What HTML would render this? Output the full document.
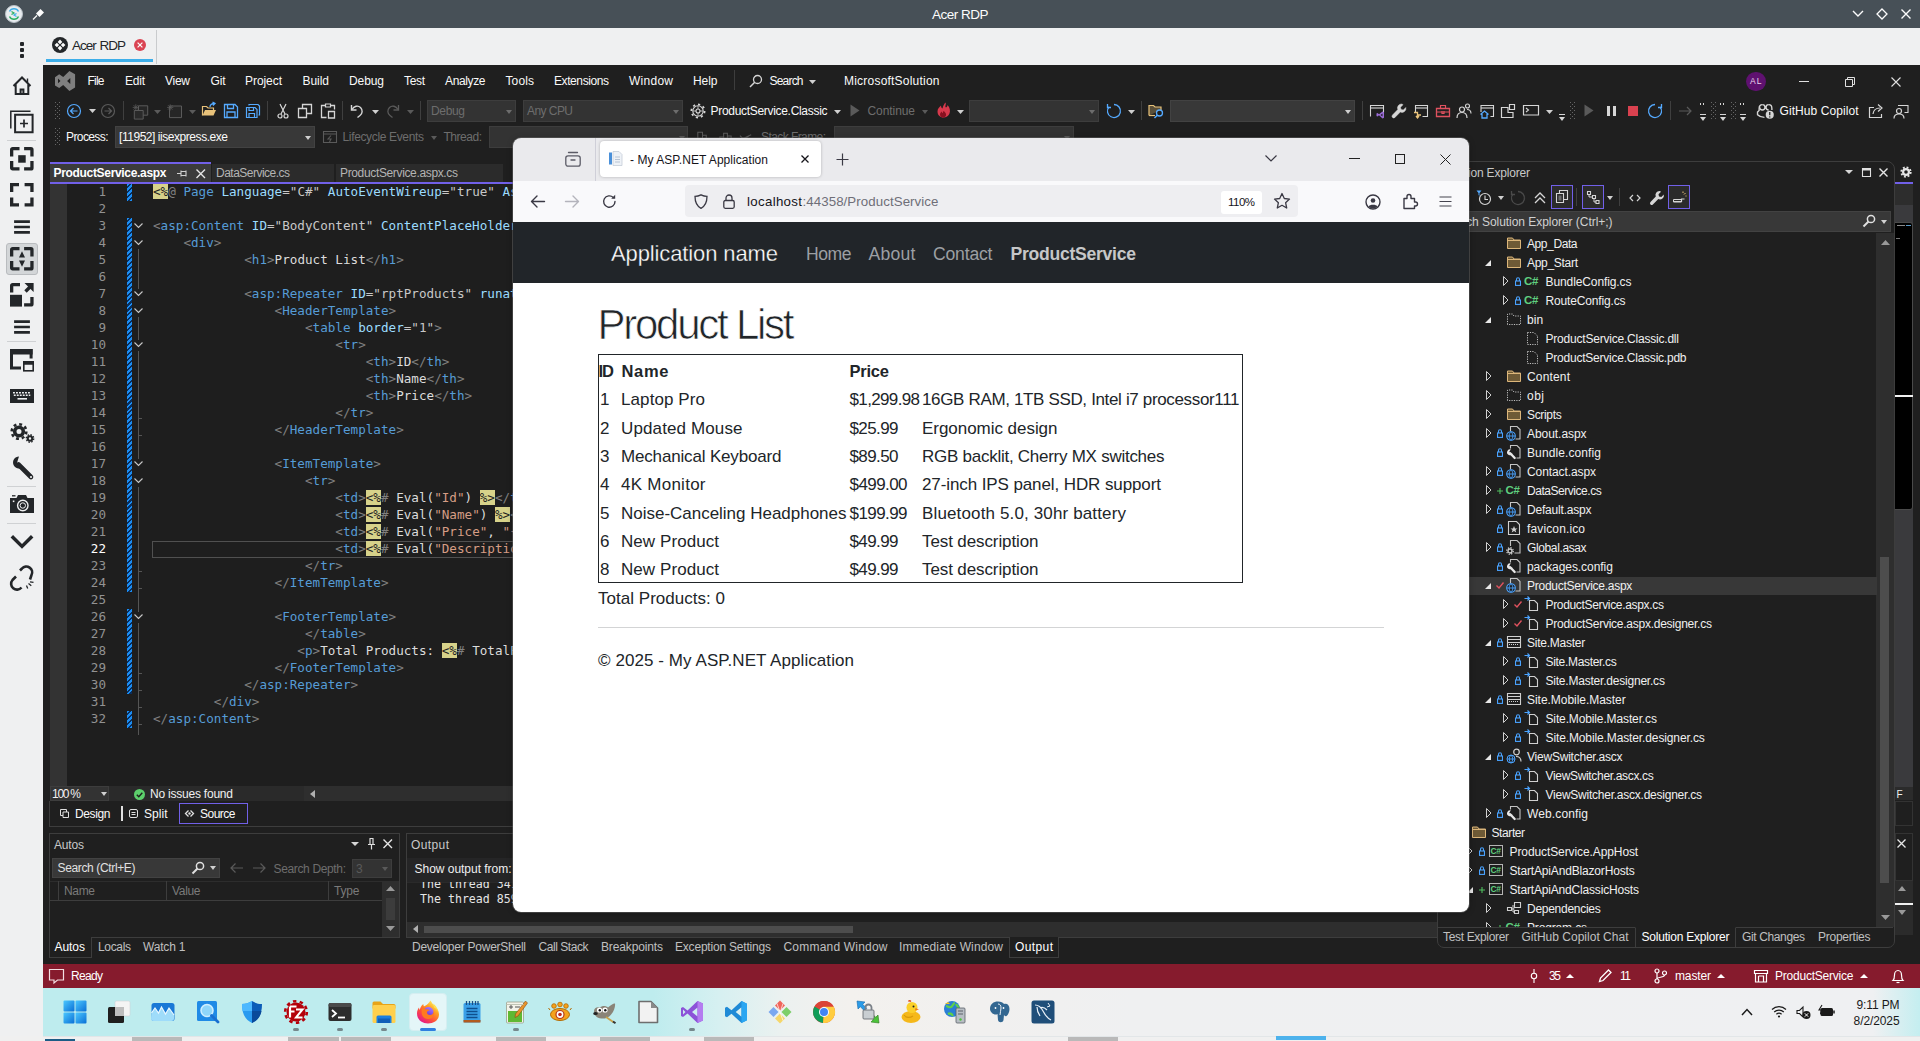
<!DOCTYPE html>
<html><head><meta charset="utf-8"><title>Acer RDP</title>
<style>
*{box-sizing:border-box}
html,body{margin:0;padding:0}
body{width:1920px;height:1041px;overflow:hidden;position:relative;background:#eff0f1;font-family:"Liberation Sans",sans-serif;font-size:12px;color:#fff}
.a{position:absolute}
.t{position:absolute;white-space:nowrap;line-height:1}
svg{position:absolute;overflow:visible}
.mono{font-family:"DejaVu Sans Mono","Liberation Mono",monospace}
.vs{font-family:"Liberation Sans",sans-serif;font-size:12px;color:#fafafa}
.dim{color:#6d6d6d}
.cb{position:absolute;background:#383838;border:1px solid #424242}
.cl{position:absolute;left:153px;white-space:pre;font-family:"DejaVu Sans Mono","Liberation Mono",monospace;font-size:12.6px;letter-spacing:0.015px;line-height:17px;height:17px;color:#dcdcdc}
.ln{position:absolute;left:60px;width:46px;text-align:right;font-family:"DejaVu Sans Mono","Liberation Mono",monospace;font-size:12.6px;line-height:17px;height:17px;color:#a0a0a0}
.g{color:#808080}.b{color:#569cd6}.lb{color:#9cdcfe}.s{color:#c8c8c8}.o{color:#d69d85}.w{color:#dcdcdc}
.y{background:#d7d28a;color:#1e1e1e}
.tr{position:absolute;white-space:nowrap;font-size:12px;line-height:19px;height:19px;color:#f1f1f1}
</style></head><body>

<!-- Acer RDP title bar -->
<div class="a" style="left:0;top:0;width:1920px;height:28px;background:#475057"></div>
<div class="t" style="left:0;width:1920px;top:7.500px;text-align:center;font-size:13.500px;color:#fcfcfc;letter-spacing:-0.500px">Acer RDP</div>
<svg style="left:5px;top:5px" width="18" height="18" viewBox="0 0 18 18"><circle cx="9" cy="9" r="8.5" fill="#e8ecef" stroke="#b8c0c6" stroke-width="1"/><path d="M4.5 11.5a5 5 0 0 0 9 0" fill="none" stroke="#27ae60" stroke-width="1.4"/><path d="M4.5 6.5a5 5 0 0 1 9 0" fill="none" stroke="#3daee9" stroke-width="1.4"/><path d="M6.5 6.5l2.5 1.5l-2.500 1.500" fill="none" stroke="#27ae60" stroke-width="1.2"/><path d="M11.5 8.500l-2.500 1.500l2.500 1.500" fill="none" stroke="#3daee9" stroke-width="1.200"/></svg>
<svg style="left:32px;top:8px" width="13" height="12" viewBox="0 0 13 12"><path d="M1 11.500L5 7.500" stroke="#fcfcfc" stroke-width="1.300" fill="none"/><path d="M4 5.500l4.500-4.500l3.500 3.500l-4.500 4.500z" fill="#fcfcfc"/></svg>
<svg style="left:1852px;top:9px" width="12" height="10" viewBox="0 0 12 10"><path d="M1 2l5 5l5-5" fill="none" stroke="#fcfcfc" stroke-width="1.400"/></svg>
<svg style="left:1876px;top:8px" width="12" height="12" viewBox="0 0 12 12"><path d="M6 1l5 5l-5 5l-5-5z" fill="none" stroke="#fcfcfc" stroke-width="1.300"/></svg>
<svg style="left:1900px;top:8px" width="12" height="12" viewBox="0 0 12 12"><path d="M1.500 1.500l9 9M10.500 1.500l-9 9" fill="none" stroke="#fcfcfc" stroke-width="1.400"/></svg>
<!-- tab bar -->
<div class="a" style="left:0;top:28px;width:1920px;height:37px;background:#eff0f1"></div>
<div class="a" style="left:46px;top:59px;width:107px;height:3px;background:#3daee9"></div>
<div class="a" style="left:156px;top:30px;width:1px;height:34px;background:#c9cbcd"></div>
<svg style="left:52px;top:37px" width="16" height="16" viewBox="0 0 16 16"><circle cx="8" cy="8" r="8" fill="#232629"/><path d="M8 2.600l2.300 2.300L8 7.200L5.700 4.900zM8 8.800l2.300 2.300L8 13.400l-2.300-2.300zM4.900 5.700l2.300 2.300l-2.300 2.300L2.600 8zM11.100 5.700l2.300 2.300l-2.300 2.300L8.800 8z" fill="#fcfcfc"/></svg>
<div class="t" style="left:72px;top:38.500px;font-size:13.500px;color:#232629;letter-spacing:-1px;word-spacing:1px">Acer RDP</div>
<svg style="left:134px;top:39px" width="12" height="12" viewBox="0 0 12 12"><circle cx="6" cy="6" r="6" fill="#da4453"/><path d="M3.600 3.600l4.800 4.800M8.400 3.600l-4.800 4.800" stroke="#fcfcfc" stroke-width="1.200"/></svg>
<!-- left sidebar -->
<div class="a" style="left:0;top:65px;width:43px;height:976px;background:#eff0f1"></div>
<div class="a" style="left:20px;top:42px;width:4px;height:4px;background:#232629;border-radius:1px"></div>
<div class="a" style="left:20px;top:48px;width:4px;height:4px;background:#232629;border-radius:1px"></div>
<div class="a" style="left:20px;top:54px;width:4px;height:4px;background:#232629;border-radius:1px"></div>
<div class="a" style="left:7px;top:140px;width:29px;height:1px;background:#cfd1d3"></div>
<div class="a" style="left:7px;top:341px;width:29px;height:1px;background:#cfd1d3"></div>
<div class="a" style="left:7px;top:486px;width:29px;height:1px;background:#cfd1d3"></div>
<div class="a" style="left:7px;top:523px;width:29px;height:1px;background:#cfd1d3"></div>
<div class="a" style="left:6px;top:243px;width:32px;height:32px;background:#d3d6d8;border:1px solid #b9bcbf;border-radius:3px"></div>
<svg style="left:10.0px;top:74.0px" width="24" height="24" viewBox="0 0 24 24" fill="none" stroke="#232629" stroke-width="2"><path d="M3.500 12L12 3.500L20.500 12M5.700 10.500v9.500h12.600v-9.500" stroke-width="2"/><path d="M10.600 20v-4.500h2.800v4.500" stroke-width="2"/><path d="M17.500 4.500v4" stroke-width="1.400"/></svg><svg style="left:10.0px;top:110.0px" width="24" height="24" viewBox="0 0 24 24" fill="none" stroke="#232629" stroke-width="2"><path d="M5.100 4.700H22.600V22.300H5.100z" stroke-width="2"/><path d="M0.800 18.500V1.200h19.700" stroke-width="1.500"/><path d="M14 9.500v8M10 13.500h8" stroke-width="1.700"/></svg><svg style="left:10.0px;top:147.0px" width="24" height="24" viewBox="0 0 24 24" fill="none" stroke="#232629" stroke-width="2"><path d="M1.650 9.500V2.650a1 1 0 0 1 1-1H9.500M14.100 1.650h6.850a1 1 0 0 1 1 1V9.500M21.950 14.100v6.850a1 1 0 0 1-1 1H14.100M9.500 21.950H2.650a1 1 0 0 1-1-1V14.100" stroke-width="3.300"/><rect x="8.200" y="8.200" width="7.500" height="7.500" fill="#232629" stroke="none"/></svg><svg style="left:10.0px;top:183.0px" width="24" height="24" viewBox="0 0 24 24" fill="none" stroke="#232629" stroke-width="2"><path d="M1.650 9V1.650H9M14.600 1.650h7.350V9M21.950 14.600v7.350H14.600M9 21.950H1.650V14.600" stroke-width="3.300"/></svg><svg style="left:10.0px;top:214.8px" width="24" height="24" viewBox="0 0 24 24" fill="none" stroke="#232629" stroke-width="2"><path d="M4.100 6.600h15.800M4.100 12h15.800M4.100 17.400h15.800" stroke-width="2.600"/></svg><svg style="left:10.0px;top:247.0px" width="24" height="24" viewBox="0 0 24 24" fill="none" stroke="#232629" stroke-width="2"><path d="M1.650 9.500V2.650a1 1 0 0 1 1-1H9.500M14.100 1.650h6.850a1 1 0 0 1 1 1V9.500M21.950 14.100v6.850a1 1 0 0 1-1 1H14.100M9.500 21.950H2.650a1 1 0 0 1-1-1V14.100" stroke-width="3.300"/><path d="M12 4.300l3 6.200h-6zM12 19.700l3-6.200h-6z" fill="#232629" stroke="none"/></svg><svg style="left:10.0px;top:283.0px" width="24" height="24" viewBox="0 0 24 24" fill="none" stroke="#232629" stroke-width="2"><path d="M1.650 9.500V2.650a1 1 0 0 1 1-1H10M21.950 14v6.950a1 1 0 0 1-1 1H14.100" stroke-width="3.300"/><rect x="0" y="11.800" width="12" height="11.800" fill="#232629" stroke="none"/><path d="M15.500 8.500l6-6" stroke-width="3.300"/><path d="M14.500 0h9.100v9.100z" fill="#232629" stroke="none"/></svg><svg style="left:10.0px;top:314.8px" width="24" height="24" viewBox="0 0 24 24" fill="none" stroke="#232629" stroke-width="2"><path d="M4.100 6.600h15.800M4.100 12h15.800M4.100 17.400h15.800" stroke-width="2.600"/></svg><svg style="left:10.0px;top:348.0px" width="24" height="24" viewBox="0 0 24 24" fill="none" stroke="#232629" stroke-width="2"><path d="M11 20H1.500V2.500h19.600v8" stroke-width="3"/><path d="M0 1h22.600v5.500H0z" fill="#232629" stroke="none"/><rect x="13.800" y="13.800" width="9.400" height="9" stroke-width="1.600"/><path d="M13.800 13.800h9.400v3h-9.400z" fill="#232629" stroke="none"/></svg><svg style="left:10.0px;top:384.0px" width="24" height="24" viewBox="0 0 24 24" fill="none" stroke="#232629" stroke-width="2"><rect x="0" y="5" width="24" height="14" fill="#232629" stroke="none"/><path d="M3 8.700h18M3.800 11.300h16.500" stroke="#eff0f1" stroke-width="1.500" stroke-dasharray="1.900 1.100"/><path d="M7.500 14.800h9.500" stroke="#eff0f1" stroke-width="1.600"/></svg><svg style="left:10.0px;top:420.0px" width="24" height="24" viewBox="0 0 24 24" fill="none" stroke="#232629" stroke-width="2"><circle cx="9" cy="11.500" r="4.300" stroke-width="3.600"/><circle cx="9" cy="11.500" r="7.300" stroke-width="2.600" stroke-dasharray="2.900 2.830"/><circle cx="20" cy="18.500" r="2.200" stroke-width="2"/><circle cx="20" cy="18.500" r="3.700" stroke-width="1.400" stroke-dasharray="1.500 1.400"/></svg><svg style="left:10.0px;top:456.0px" width="24" height="24" viewBox="0 0 24 24" fill="none" stroke="#232629" stroke-width="2"><path d="M8.500 8.500L21 21" stroke-width="4.600" stroke-linecap="round"/><path d="M9 0.500a6 6 0 1 0 4.500 10l-4-0.500l-2.500-3l1-3.500z" fill="#232629" stroke="none"/><path d="M0.300 5.500a6.500 6.500 0 0 0 10 5.500" stroke-width="0"/><circle cx="21" cy="21" r="1.100" fill="#eff0f1" stroke="none"/></svg><svg style="left:10.0px;top:493.0px" width="24" height="24" viewBox="0 0 24 24" fill="none" stroke="#232629" stroke-width="2"><path d="M0 5h6.500l1.500-3h8l1.500 3h6.500v15h-24z" fill="#232629" stroke="none"/><path d="M2 2.800h3.500" stroke-width="1.300"/><circle cx="12.800" cy="12.500" r="5.200" fill="#232629" stroke="#eff0f1" stroke-width="1.400"/><circle cx="12.800" cy="12.500" r="2.700" fill="#232629" stroke="#eff0f1" stroke-width="1"/><rect x="2.800" y="7.500" width="1.600" height="1.600" fill="#eff0f1" stroke="none"/></svg><svg style="left:10.0px;top:530.0px" width="24" height="24" viewBox="0 0 24 24" fill="none" stroke="#232629" stroke-width="2"><path d="M1.800 6.200l10.200 10.200l10.200-10.200" stroke-width="3.500"/></svg><svg style="left:10.0px;top:566.0px" width="24" height="24" viewBox="0 0 24 24" fill="none" stroke="#232629" stroke-width="2"><path d="M11.500 21.500a5.800 5.800 0 0 1-9-7.500l3.500-3.500M10 4.500l2-2a5.800 5.800 0 0 1 9.500 6.500l-1.500 4.500" stroke-width="2.600" stroke-linecap="butt"/><path d="M16.500 19.500l1.200 3M18.500 17.500l2.800 2.200M20 15.800l3.500 0.500" stroke-width="1.300"/></svg><div class="a" style="left:43px;top:65px;width:1877px;height:923px;background:#1f1f1f;"></div><div class="t" style="left:87.5px;top:72.84px;font-size:12px;line-height:16px;height:16px;color:#fafafa;letter-spacing:-0.779px;">File</div><div class="t" style="left:125px;top:72.84px;font-size:12px;line-height:16px;height:16px;color:#fafafa;letter-spacing:-0.226px;">Edit</div><div class="t" style="left:165px;top:72.84px;font-size:12px;line-height:16px;height:16px;color:#fafafa;letter-spacing:-0.265px;">View</div><div class="t" style="left:210.5px;top:72.84px;font-size:12px;line-height:16px;height:16px;color:#fafafa;letter-spacing:-0.167px;">Git</div><div class="t" style="left:245px;top:72.84px;font-size:12px;line-height:16px;height:16px;color:#fafafa;letter-spacing:-0.058px;">Project</div><div class="t" style="left:302.5px;top:72.84px;font-size:12px;line-height:16px;height:16px;color:#fafafa;letter-spacing:-0.046px;">Build</div><div class="t" style="left:349px;top:72.84px;font-size:12px;line-height:16px;height:16px;color:#fafafa;letter-spacing:-0.091px;">Debug</div><div class="t" style="left:404px;top:72.84px;font-size:12px;line-height:16px;height:16px;color:#fafafa;letter-spacing:-0.336px;">Test</div><div class="t" style="left:445px;top:72.84px;font-size:12px;line-height:16px;height:16px;color:#fafafa;letter-spacing:-0.365px;">Analyze</div><div class="t" style="left:505.5px;top:72.84px;font-size:12px;line-height:16px;height:16px;color:#fafafa;letter-spacing:0.121px;">Tools</div><div class="t" style="left:554px;top:72.84px;font-size:12px;line-height:16px;height:16px;color:#fafafa;letter-spacing:-0.411px;">Extensions</div><div class="t" style="left:629px;top:72.84px;font-size:12px;line-height:16px;height:16px;color:#fafafa;letter-spacing:0.264px;">Window</div><div class="t" style="left:693px;top:72.84px;font-size:12px;line-height:16px;height:16px;color:#fafafa;letter-spacing:-0.06px;">Help</div><div class="a" style="left:734px;top:70px;width:1px;height:20px;background:#3d3d3d;"></div><svg style="left:749px;top:74px;" width="14" height="14" viewBox="0 0 14 14"><circle cx="8.500" cy="5.500" r="4" fill="none" stroke="#d6d6d6" stroke-width="1.300"/><path d="M5.700 8.300L1 13" stroke="#d6d6d6" stroke-width="1.500"/></svg><div class="t" style="left:769.5px;top:72.84px;font-size:12px;line-height:16px;height:16px;color:#fafafa;letter-spacing:-0.805px;">Search</div><svg style="left:809.0px;top:80px;" width="7" height="4" viewBox="0 0 7 4"><path d="M0 0h7l-3.5 4z" fill="#d0d0d0"/></svg><div class="t" style="left:844px;top:72.84px;font-size:12px;line-height:16px;height:16px;color:#fafafa;letter-spacing:0.216px;">MicrosoftSolution</div><svg style="left:54.9px;top:71px;" width="20.2" height="20" viewBox="0 0 20.2 20"><path d="M0 6.300L4.200 3.200L8.200 5.900L14.400 0L20.100 3.200V16.500L14.400 20L8.200 14.100L4.200 16.900L0 14.400zM3 7.400L5.500 9.900L3 12.300zM15.300 6.900V13.100L12.100 10z" fill="#7f7f7f" fill-rule="evenodd"/></svg><div class="a" style="left:1746px;top:71.5px;width:19.5px;height:19.5px;background:#5f1170;border-radius:50%"></div><div class="t" style="left:1750px;top:76.05px;font-size:8.5px;line-height:11px;height:11px;color:#e8d6ee;letter-spacing:1.103px;">AL</div><div class="a" style="left:1799px;top:81px;width:10px;height:1px;background:#e0e0e0;"></div><svg style="left:1845px;top:77px;" width="10" height="10" viewBox="0 0 10 10"><path d="M0.500 2.500h7v7h-7z" fill="none" stroke="#e0e0e0" stroke-width="1"/><path d="M2.500 2.500v-2h7v7h-2" fill="none" stroke="#e0e0e0" stroke-width="1"/></svg><svg style="left:1891px;top:77px;" width="10" height="10" viewBox="0 0 10 10"><path d="M0.500 0.500l9 9M9.500 0.500l-9 9" stroke="#e0e0e0" stroke-width="1.100" fill="none"/></svg><svg style="left:55px;top:102px;" width="6" height="18" viewBox="0 0 6 18"><rect x="0" y="0" width="1" height="1" fill="#666"/><rect x="4" y="0" width="1" height="1" fill="#666"/><rect x="2" y="2" width="1" height="1" fill="#666"/><rect x="0" y="4" width="1" height="1" fill="#666"/><rect x="4" y="4" width="1" height="1" fill="#666"/><rect x="2" y="6" width="1" height="1" fill="#666"/><rect x="0" y="8" width="1" height="1" fill="#666"/><rect x="4" y="8" width="1" height="1" fill="#666"/><rect x="2" y="10" width="1" height="1" fill="#666"/><rect x="0" y="12" width="1" height="1" fill="#666"/><rect x="4" y="12" width="1" height="1" fill="#666"/><rect x="2" y="14" width="1" height="1" fill="#666"/><rect x="0" y="16" width="1" height="1" fill="#666"/><rect x="4" y="16" width="1" height="1" fill="#666"/></svg><svg style="left:66.0px;top:102.5px;" width="16" height="16" viewBox="0 0 16 16"><circle cx="8" cy="8" r="6.500" fill="none" stroke="#55aaff" stroke-width="1.200"/><path d="M11.500 8h-7M7.500 5l-3 3l3 3" fill="none" stroke="#55aaff" stroke-width="1.200"/></svg><svg style="left:88.5px;top:109px;" width="7" height="4" viewBox="0 0 7 4"><path d="M0 0h7l-3.5 4z" fill="#d0d0d0"/></svg><svg style="left:100.0px;top:102.5px;" width="16" height="16" viewBox="0 0 16 16"><circle cx="8" cy="8" r="6.500" fill="none" stroke="#5a5a5a" stroke-width="1.200"/><path d="M4.500 8h7M8.500 5l3 3l-3 3" fill="none" stroke="#5a5a5a" stroke-width="1.200"/></svg><div class="a" style="left:123px;top:101px;width:1px;height:19px;background:#3f3f3f;"></div><svg style="left:132.0px;top:102.5px;" width="16" height="16" viewBox="0 0 16 16"><path d="M6.500 2.800h9.200v9.400h-9.200z" fill="#262626" stroke="#5a5a5a"/><path d="M2.300 7.500h8.900v8.600h-8.900z" fill="#2a2a2a" stroke="#5a5a5a"/><path d="M3.800 1.300v6.200M0.700 4.400h6.200M1.600 2.200l4.400 4.400M6 2.200l-4.400 4.400" stroke="#5a5a5a" stroke-width="0.800"/></svg><svg style="left:153.5px;top:109.5px;" width="7" height="4" viewBox="0 0 7 4"><path d="M0 0h7l-3.5 4z" fill="#5a5a5a"/></svg><svg style="left:167.0px;top:102.5px;" width="16" height="16" viewBox="0 0 16 16"><path d="M2.500 3h12v11.600h-12z" fill="#262626" stroke="#5a5a5a"/><path d="M3.200 1.300v6.200M0.100 4.400h6.200M1 2.200l4.400 4.400M5.400 2.200l-4.400 4.400" stroke="#5a5a5a" stroke-width="0.800"/></svg><svg style="left:188.5px;top:109.5px;" width="7" height="4" viewBox="0 0 7 4"><path d="M0 0h7l-3.5 4z" fill="#5a5a5a"/></svg><svg style="left:201.0px;top:102.0px;" width="16" height="16" viewBox="0 0 16 16"><path d="M1.500 13.500v-9h4l1.500 1.500h5.500v2" fill="none" stroke="#e8c27a" stroke-width="1.200"/><path d="M1.500 13.500l2.500-5.500h11l-2.500 5.500z" fill="#e8c27a"/><path d="M9 5c0-2.500 2-3.500 4.500-3.500M11.500 0l2.500 1.500l-2 2" fill="none" stroke="#55aaff" stroke-width="1.300"/></svg><svg style="left:223.0px;top:102.5px;" width="16" height="16" viewBox="0 0 16 16"><path d="M1.500 1.500h10.500l2.500 2.500v10.500h-13z" fill="none" stroke="#55aaff" stroke-width="1.300"/><path d="M4.500 1.500v4h6v-4M4 14.500v-5.500h8v5.500" fill="none" stroke="#55aaff" stroke-width="1.300"/></svg><svg style="left:244.5px;top:102.5px;" width="16" height="16" viewBox="0 0 16 16"><path d="M1.500 4.500h8.500l2 2v8h-10.500z" fill="none" stroke="#55aaff" stroke-width="1.200"/><path d="M4 4.500v3h4.500v-3M4 14.500v-4h5.500v4" fill="none" stroke="#55aaff" stroke-width="1.200"/><path d="M4 2.500v-1h9l1.500 1.500v9h-1" fill="none" stroke="#55aaff" stroke-width="1.200"/></svg><div class="a" style="left:267px;top:101px;width:1px;height:19px;background:#3f3f3f;"></div><svg style="left:274.5px;top:102.5px;" width="16" height="16" viewBox="0 0 16 16"><path d="M5 1l5 10M11 1l-5 10" stroke="#d6d6d6" stroke-width="1.200" fill="none"/><circle cx="5" cy="13" r="2" fill="none" stroke="#d6d6d6" stroke-width="1.200"/><circle cx="11" cy="13" r="2" fill="none" stroke="#d6d6d6" stroke-width="1.200"/></svg><svg style="left:297.0px;top:102.5px;" width="16" height="16" viewBox="0 0 16 16"><path d="M1.500 5.500h8v9h-8z" fill="none" stroke="#d6d6d6" stroke-width="1.300"/><path d="M5.500 5v-3.500h9v9h-4.500" fill="none" stroke="#d6d6d6" stroke-width="1.300"/></svg><svg style="left:319.5px;top:102.5px;" width="16" height="16" viewBox="0 0 16 16"><path d="M5 2.500h-3.500v12h5M11 2.500h3.500v4" fill="none" stroke="#d6d6d6" stroke-width="1.300"/><path d="M5.500 1h5v3h-5z" fill="none" stroke="#d6d6d6" stroke-width="1.200"/><path d="M8.500 8.500h6v6.500h-6z" fill="none" stroke="#d6d6d6" stroke-width="1.300"/></svg><div class="a" style="left:341.5px;top:101px;width:1px;height:19px;background:#3f3f3f;"></div><svg style="left:349.0px;top:102.5px;" width="16" height="16" viewBox="0 0 16 16"><path d="M2.500 2v5h5" fill="none" stroke="#d6d6d6" stroke-width="1.400"/><path d="M3 6.500c2-3.500 6-4.500 8.500-2s2 6-0.500 8l-2.500 2" fill="none" stroke="#d6d6d6" stroke-width="1.400"/></svg><svg style="left:371.5px;top:109.5px;" width="7" height="4" viewBox="0 0 7 4"><path d="M0 0h7l-3.5 4z" fill="#d0d0d0"/></svg><svg style="left:384.5px;top:102.5px;" width="16" height="16" viewBox="0 0 16 16"><path d="M13.500 2v5h-5" fill="none" stroke="#5a5a5a" stroke-width="1.300"/><path d="M13 6.500c-2-3.500-6-4.500-8.500-2s-2 6 0.500 8l2.500 2" fill="none" stroke="#5a5a5a" stroke-width="1.300"/></svg><svg style="left:406.5px;top:109.5px;" width="7" height="4" viewBox="0 0 7 4"><path d="M0 0h7l-3.5 4z" fill="#5a5a5a"/></svg><div class="a" style="left:419.5px;top:101px;width:1px;height:19px;background:#3f3f3f;"></div><div class="a" style="left:427px;top:100px;width:89px;height:22px;background:#333333;border:1px solid #3d3d3d"></div><div class="t" style="left:431px;top:103.34px;font-size:12px;line-height:16px;height:16px;color:#6d6d6d;letter-spacing:-0.341px;">Debug</div><svg style="left:505.5px;top:109.5px;" width="6" height="4" viewBox="0 0 6 4"><path d="M0 0h6l-3.0 4z" fill="#6d6d6d"/></svg><div class="a" style="left:523px;top:100px;width:160px;height:22px;background:#333333;border:1px solid #3d3d3d"></div><div class="t" style="left:527px;top:103.34px;font-size:12px;line-height:16px;height:16px;color:#6d6d6d;letter-spacing:-0.558px;">Any CPU</div><svg style="left:672.5px;top:109.5px;" width="6" height="4" viewBox="0 0 6 4"><path d="M0 0h6l-3.0 4z" fill="#6d6d6d"/></svg><svg style="left:689.5px;top:102.5px;" width="16" height="16" viewBox="0 0 16 16"><circle cx="8" cy="8" r="5.200" fill="none" stroke="#d6d6d6" stroke-width="1.100"/><circle cx="8" cy="8" r="2" fill="none" stroke="#d6d6d6" stroke-width="1.100"/><circle cx="8" cy="8" r="6.600" fill="none" stroke="#d6d6d6" stroke-width="1.800" stroke-dasharray="2.200 2.950"/><path d="M8 3v3M8 10v3M3 8h3M10 8h3" stroke="#d6d6d6" stroke-width="0.800"/></svg><div class="t" style="left:710.5px;top:103.34px;font-size:12px;line-height:16px;height:16px;color:#fafafa;letter-spacing:-0.304px;">ProductService.Classic</div><svg style="left:833.5px;top:109.5px;" width="7" height="4" viewBox="0 0 7 4"><path d="M0 0h7l-3.5 4z" fill="#d0d0d0"/></svg><svg style="left:850px;top:104px;" width="10" height="13" viewBox="0 0 10 13"><path d="M0.500 0.500l9 6l-9 6z" fill="#5a5a5a"/></svg><div class="t" style="left:867.5px;top:103.34px;font-size:12px;line-height:16px;height:16px;color:#6d6d6d;letter-spacing:-0.077px;">Continue</div><svg style="left:922.0px;top:109.5px;" width="6" height="4" viewBox="0 0 6 4"><path d="M0 0h6l-3.0 4z" fill="#5a5a5a"/></svg><svg style="left:935.5px;top:102.0px;" width="16" height="16" viewBox="0 0 16 16"><path d="M9.500 0.500c1 2-1 3.500 0.500 5c1-0.500 1.500-1.500 1.500-2.500c2.500 2.500 3 6 2 8.500c-1 2.500-3.500 4-6 4c-3.500 0-6-2.500-6-6c0-3 2-4.500 3.500-6c0 1.500 0.500 2.500 1.500 3c0.500-2.500 1.500-4.500 3-6z" fill="#d8394c"/><path d="M7.500 9c1.500 1 3 2.500 2.500 4.500c-0.500 1.500-2 2-3 2c-2 0-3-1.500-3-3c0-1.500 1-2.500 2-3c0 1 0.500 1.500 1 1.500c0-0.500 0-1.500 0.500-2z" fill="#8a1020"/></svg><svg style="left:956.5px;top:109.5px;" width="7" height="4" viewBox="0 0 7 4"><path d="M0 0h7l-3.5 4z" fill="#d0d0d0"/></svg><div class="a" style="left:969px;top:100px;width:130px;height:22px;background:#333333;border:1px solid #3d3d3d"></div><svg style="left:1089.0px;top:109.5px;" width="6" height="4" viewBox="0 0 6 4"><path d="M0 0h6l-3.0 4z" fill="#6d6d6d"/></svg><svg style="left:1105.5px;top:102.5px;" width="16" height="16" viewBox="0 0 16 16"><path d="M8 1.500a6.500 6.500 0 1 1-5 2.300" fill="none" stroke="#55aaff" stroke-width="1.300"/><path d="M1.500 1v3.500h3.500" fill="none" stroke="#55aaff" stroke-width="1.300"/></svg><svg style="left:1127.5px;top:109.5px;" width="7" height="4" viewBox="0 0 7 4"><path d="M0 0h7l-3.5 4z" fill="#d0d0d0"/></svg><div class="a" style="left:1140.5px;top:101px;width:1px;height:19px;background:#3f3f3f;"></div><svg style="left:1148.0px;top:102.5px;" width="16" height="16" viewBox="0 0 16 16"><path d="M1 12.500v-10h4.500l1.500 1.500h6v3" fill="#c9a86a" fill-opacity="0.35" stroke="#e8c27a" stroke-width="1.200"/><path d="M1 12.500h6" stroke="#e8c27a" stroke-width="1.200"/><circle cx="11.500" cy="10" r="3" fill="none" stroke="#55aaff" stroke-width="1.300"/><path d="M9.300 12.200l-2.800 2.800" stroke="#55aaff" stroke-width="1.500"/></svg><div class="a" style="left:1170px;top:100px;width:185px;height:22px;background:#383838;border:1px solid #424242"></div><svg style="left:1344.5px;top:109.5px;" width="6" height="4" viewBox="0 0 6 4"><path d="M0 0h6l-3.0 4z" fill="#d0d0d0"/></svg><div class="a" style="left:1361.5px;top:101px;width:1px;height:19px;background:#3f3f3f;"></div><svg style="left:1368.5px;top:102.5px;" width="16" height="16" viewBox="0 0 16 16"><path d="M1.500 13.500v-11h13v7" fill="none" stroke="#d6d6d6" stroke-width="1.100"/><path d="M1.500 5h13" stroke="#d6d6d6" stroke-width="1.100"/><path d="M13.500 8.500l1.500 0.800v5.400l-1.500 0.800l-3.500-3.200l-1.500 1.200l-1-0.500v-2.500l1-0.500l1.500 1.200zM13.500 10.500l-2 1.500l2 1.500z" fill="#9b6cd8" fill-rule="evenodd"/></svg><svg style="left:1390.5px;top:102.5px;" width="16" height="16" viewBox="0 0 16 16"><path d="M10.500 1a4 4 0 0 0-3.700 5.600L1.500 12a1.600 1.600 0 0 0 2.400 2.400l5.400-5.300A4 4 0 0 0 14.800 4.500l-2.500 2.500l-2.300-0.500l-0.500-2.300l2.500-2.500a4 4 0 0 0-1.500-0.700z" fill="#d6d6d6" stroke="#d6d6d6" stroke-width="0.500"/></svg><svg style="left:1412.5px;top:102.5px;" width="16" height="16" viewBox="0 0 16 16"><path d="M2.500 9v-6.500h12v11h-5" fill="none" stroke="#d6d6d6" stroke-width="1.100"/><path d="M2.500 5h12" stroke="#d6d6d6" stroke-width="1.100"/><path d="M1 9.500h3.500v5.500M3 13l1.500 2l1.500-2M4.500 12h3.500" fill="none" stroke="#e8c27a" stroke-width="1.300"/></svg><svg style="left:1435.0px;top:102.5px;" width="16" height="16" viewBox="0 0 16 16"><path d="M1.500 5.500h13v8h-13z" fill="none" stroke="#e0525f" stroke-width="1.300"/><path d="M5.500 5v-2.500h5v2.500M1.500 9h13M7 8v2.500h2v-2.500" fill="none" stroke="#e0525f" stroke-width="1.200"/></svg><svg style="left:1456.0px;top:102.5px;" width="16" height="16" viewBox="0 0 16 16"><circle cx="6" cy="6.500" r="2.500" fill="none" stroke="#d6d6d6" stroke-width="1.200"/><path d="M1 15c0-4 2-5.500 5-5.500s5 1.500 5 5.500" fill="none" stroke="#d6d6d6" stroke-width="1.200"/><circle cx="11.500" cy="3" r="2" fill="none" stroke="#d6d6d6" stroke-width="1.100"/><path d="M11 6.500c2.500 0 4 1 4 4" fill="none" stroke="#d6d6d6" stroke-width="1.100"/></svg><svg style="left:1478.5px;top:102.5px;" width="16" height="16" viewBox="0 0 16 16"><path d="M2 9v-6.500h12.500v11h-3" fill="none" stroke="#d6d6d6" stroke-width="1.100"/><path d="M2 5h12.500" stroke="#d6d6d6" stroke-width="1.100"/><path d="M1.500 11.500l4-3.500l4 3.500M3 11v4h5v-4" fill="none" stroke="#55aaff" stroke-width="1.300"/></svg><svg style="left:1500.0px;top:102.5px;" width="16" height="16" viewBox="0 0 16 16"><path d="M1.500 4.500h6.500v5h5v5h-11.500z" fill="none" stroke="#d6d6d6" stroke-width="1.200"/><path d="M9.500 1.500h5v5h-5z" fill="none" stroke="#d6d6d6" stroke-width="1.200"/></svg><svg style="left:1523.0px;top:102.0px;" width="16" height="16" viewBox="0 0 16 16"><path d="M0.500 3.500h15v9.500h-15z" fill="none" stroke="#d6d6d6" stroke-width="1.200"/><path d="M3 6l2.500 2l-2.500 2" fill="none" stroke="#d6d6d6" stroke-width="1.100"/></svg><svg style="left:1545.5px;top:109.5px;" width="7" height="4" viewBox="0 0 7 4"><path d="M0 0h7l-3.5 4z" fill="#d0d0d0"/></svg><div class="a" style="left:1558.5px;top:114px;width:6px;height:1px;background:#d6d6d6;"></div><svg style="left:1558.5px;top:116.5px;" width="6" height="4" viewBox="0 0 6 4"><path d="M0 0h6l-3.0 4z" fill="#d6d6d6"/></svg><svg style="left:1570px;top:102px;" width="6" height="18" viewBox="0 0 6 18"><rect x="0" y="0" width="1" height="1" fill="#666"/><rect x="4" y="0" width="1" height="1" fill="#666"/><rect x="2" y="2" width="1" height="1" fill="#666"/><rect x="0" y="4" width="1" height="1" fill="#666"/><rect x="4" y="4" width="1" height="1" fill="#666"/><rect x="2" y="6" width="1" height="1" fill="#666"/><rect x="0" y="8" width="1" height="1" fill="#666"/><rect x="4" y="8" width="1" height="1" fill="#666"/><rect x="2" y="10" width="1" height="1" fill="#666"/><rect x="0" y="12" width="1" height="1" fill="#666"/><rect x="4" y="12" width="1" height="1" fill="#666"/><rect x="2" y="14" width="1" height="1" fill="#666"/><rect x="0" y="16" width="1" height="1" fill="#666"/><rect x="4" y="16" width="1" height="1" fill="#666"/></svg><svg style="left:1584px;top:104px;" width="10" height="13" viewBox="0 0 10 13"><path d="M0.500 0.500l9 6l-9 6z" fill="#5a5a5a"/></svg><div class="a" style="left:1606.5px;top:105.5px;width:3.5px;height:10px;background:#d6d6d6;"></div><div class="a" style="left:1612.5px;top:105.5px;width:3.5px;height:10px;background:#d6d6d6;"></div><div class="a" style="left:1628px;top:105.5px;width:10px;height:10px;background:#d9414f;"></div><svg style="left:1647.0px;top:102.5px;" width="16" height="16" viewBox="0 0 16 16"><path d="M8 1.500a6.500 6.500 0 1 0 5 2.300" fill="none" stroke="#55aaff" stroke-width="1.300"/><path d="M14.500 1v3.500h-3.500" fill="none" stroke="#55aaff" stroke-width="1.300"/></svg><div class="a" style="left:1669.5px;top:101px;width:1px;height:19px;background:#3f3f3f;"></div><svg style="left:1677.0px;top:103.0px;" width="16" height="16" viewBox="0 0 16 16"><path d="M2 8h12M10 4l4 4l-4 4" fill="none" stroke="#5a5a5a" stroke-width="1.200"/></svg><div class="a" style="left:1699.5px;top:103px;width:1px;height:2px;background:#d6d6d6;"></div><div class="a" style="left:1702.5px;top:103px;width:1px;height:2px;background:#d6d6d6;"></div><div class="a" style="left:1699.5px;top:114px;width:6px;height:1px;background:#d6d6d6;"></div><svg style="left:1699.5px;top:116.5px;" width="6" height="4" viewBox="0 0 6 4"><path d="M0 0h6l-3.0 4z" fill="#d6d6d6"/></svg><div class="a" style="left:1719.5px;top:103px;width:1px;height:2px;background:#d6d6d6;"></div><div class="a" style="left:1722.5px;top:103px;width:1px;height:2px;background:#d6d6d6;"></div><div class="a" style="left:1719.5px;top:114px;width:6px;height:1px;background:#d6d6d6;"></div><svg style="left:1719.5px;top:116.5px;" width="6" height="4" viewBox="0 0 6 4"><path d="M0 0h6l-3.0 4z" fill="#d6d6d6"/></svg><div class="a" style="left:1739.5px;top:103px;width:1px;height:2px;background:#d6d6d6;"></div><div class="a" style="left:1742.5px;top:103px;width:1px;height:2px;background:#d6d6d6;"></div><div class="a" style="left:1739.5px;top:114px;width:6px;height:1px;background:#d6d6d6;"></div><svg style="left:1739.5px;top:116.5px;" width="6" height="4" viewBox="0 0 6 4"><path d="M0 0h6l-3.0 4z" fill="#d6d6d6"/></svg><svg style="left:1711px;top:102px;" width="6" height="18" viewBox="0 0 6 18"><rect x="0" y="0" width="1" height="1" fill="#666"/><rect x="4" y="0" width="1" height="1" fill="#666"/><rect x="2" y="2" width="1" height="1" fill="#666"/><rect x="0" y="4" width="1" height="1" fill="#666"/><rect x="4" y="4" width="1" height="1" fill="#666"/><rect x="2" y="6" width="1" height="1" fill="#666"/><rect x="0" y="8" width="1" height="1" fill="#666"/><rect x="4" y="8" width="1" height="1" fill="#666"/><rect x="2" y="10" width="1" height="1" fill="#666"/><rect x="0" y="12" width="1" height="1" fill="#666"/><rect x="4" y="12" width="1" height="1" fill="#666"/><rect x="2" y="14" width="1" height="1" fill="#666"/><rect x="0" y="16" width="1" height="1" fill="#666"/><rect x="4" y="16" width="1" height="1" fill="#666"/></svg><svg style="left:1731px;top:102px;" width="6" height="18" viewBox="0 0 6 18"><rect x="0" y="0" width="1" height="1" fill="#666"/><rect x="4" y="0" width="1" height="1" fill="#666"/><rect x="2" y="2" width="1" height="1" fill="#666"/><rect x="0" y="4" width="1" height="1" fill="#666"/><rect x="4" y="4" width="1" height="1" fill="#666"/><rect x="2" y="6" width="1" height="1" fill="#666"/><rect x="0" y="8" width="1" height="1" fill="#666"/><rect x="4" y="8" width="1" height="1" fill="#666"/><rect x="2" y="10" width="1" height="1" fill="#666"/><rect x="0" y="12" width="1" height="1" fill="#666"/><rect x="4" y="12" width="1" height="1" fill="#666"/><rect x="2" y="14" width="1" height="1" fill="#666"/><rect x="0" y="16" width="1" height="1" fill="#666"/><rect x="4" y="16" width="1" height="1" fill="#666"/></svg><svg style="left:1756.5px;top:102.0px;" width="17" height="17" viewBox="0 0 16 16"><path d="M5 2.500c-2 0-3 1.500-3 3.500v2l-1.500 1.500v2.500c1.500 1.500 4 2.500 6.500 2.500M11 2.500c2 0 3 1.500 3 3.500v1.500" fill="none" stroke="#d6d6d6" stroke-width="1.300"/><path d="M5 2.500c1.500 0 2.500 1 2.500 2.500s-1 2.500-2.500 2.500s-2.500-1-2.500-2.500M11 2.500c-1.500 0-2.500 1-2.500 2.500s1 2.500 2.500 2.500" fill="none" stroke="#d6d6d6" stroke-width="1.300"/><circle cx="12" cy="12" r="3.800" fill="#d6d6d6"/><path d="M12 9.500v3" stroke="#1f1f1f" stroke-width="1.200"/><circle cx="12" cy="14" r="0.700" fill="#1f1f1f"/></svg><div class="t" style="left:1779.5px;top:103.34px;font-size:12px;line-height:16px;height:16px;color:#fafafa;letter-spacing:0.074px;">GitHub Copilot</div><svg style="left:1868.0px;top:102.5px;" width="16" height="16" viewBox="0 0 16 16"><path d="M6 4.500h-4.500v10h12v-3.500" fill="none" stroke="#d6d6d6" stroke-width="1.200"/><path d="M5 11c0.500-4 3-6 7-6M10 1.500l4 3.500l-4 3.500" fill="none" stroke="#d6d6d6" stroke-width="1.200"/></svg><svg style="left:1892.5px;top:102.5px;" width="16" height="16" viewBox="0 0 16 16"><path d="M5 2.500h10v7h-3.500" fill="none" stroke="#d6d6d6" stroke-width="1.100"/><circle cx="6" cy="8" r="2.500" fill="none" stroke="#d6d6d6" stroke-width="1.200"/><path d="M1 15.500c0-3.500 2-4.500 5-4.500s5 1 5 4.500" fill="none" stroke="#d6d6d6" stroke-width="1.200"/></svg><svg style="left:55px;top:128px;" width="6" height="18" viewBox="0 0 6 18"><rect x="0" y="0" width="1" height="1" fill="#666"/><rect x="4" y="0" width="1" height="1" fill="#666"/><rect x="2" y="2" width="1" height="1" fill="#666"/><rect x="0" y="4" width="1" height="1" fill="#666"/><rect x="4" y="4" width="1" height="1" fill="#666"/><rect x="2" y="6" width="1" height="1" fill="#666"/><rect x="0" y="8" width="1" height="1" fill="#666"/><rect x="4" y="8" width="1" height="1" fill="#666"/><rect x="2" y="10" width="1" height="1" fill="#666"/><rect x="0" y="12" width="1" height="1" fill="#666"/><rect x="4" y="12" width="1" height="1" fill="#666"/><rect x="2" y="14" width="1" height="1" fill="#666"/><rect x="0" y="16" width="1" height="1" fill="#666"/><rect x="4" y="16" width="1" height="1" fill="#666"/></svg><div class="t" style="left:66px;top:129.34px;font-size:12px;line-height:16px;height:16px;color:#fafafa;letter-spacing:-0.598px;">Process:</div><div class="a" style="left:115px;top:126px;width:200px;height:22px;background:#383838;border:1px solid #424242"></div><div class="t" style="left:119px;top:129.34px;font-size:12px;line-height:16px;height:16px;color:#fafafa;letter-spacing:-0.453px;">[11952] iisexpress.exe</div><svg style="left:304.5px;top:136px;" width="6" height="4" viewBox="0 0 6 4"><path d="M0 0h6l-3.0 4z" fill="#d0d0d0"/></svg><svg style="left:322.0px;top:129.0px;" width="16" height="16" viewBox="0 0 16 16"><path d="M1.500 2.500h13v11h-13zM1.500 5h13" fill="none" stroke="#5a5a5a" stroke-width="1.100"/><path d="M9 6.500l-3 3.500h3l-1.500 3" fill="none" stroke="#5a5a5a" stroke-width="1.100"/></svg><div class="t" style="left:342.5px;top:129.34px;font-size:12px;line-height:16px;height:16px;color:#6d6d6d;letter-spacing:-0.347px;">Lifecycle Events</div><svg style="left:431.0px;top:136px;" width="6" height="4" viewBox="0 0 6 4"><path d="M0 0h6l-3.0 4z" fill="#5a5a5a"/></svg><div class="t" style="left:443.5px;top:129.34px;font-size:12px;line-height:16px;height:16px;color:#6d6d6d;letter-spacing:-0.476px;">Thread:</div><div class="a" style="left:489px;top:126px;width:199px;height:22px;background:#333333;border:1px solid #3d3d3d"></div><svg style="left:679.0px;top:136px;" width="6" height="4" viewBox="0 0 6 4"><path d="M0 0h6l-3.0 4z" fill="#5a5a5a"/></svg><svg style="left:695.0px;top:129.5px;" width="15" height="15" viewBox="0 0 16 16"><path d="M3 2.500h5v11h-5zM8 5.500h4v8h-4" fill="none" stroke="#5a5a5a" stroke-width="1.100"/></svg><svg style="left:717.5px;top:129.5px;" width="15" height="15" viewBox="0 0 16 16"><path d="M2 7.500h4v6h-4zM6 3.500h4v10h-4zM10 6.500h4v7h-4" fill="none" stroke="#5a5a5a" stroke-width="1.100"/></svg><svg style="left:738.5px;top:129.5px;" width="15" height="15" viewBox="0 0 16 16"><path d="M1 6c3 4 6 4 10 0M2 10l11-5" fill="none" stroke="#5a5a5a" stroke-width="1.100"/></svg><div class="t" style="left:761px;top:129.34px;font-size:12px;line-height:16px;height:16px;color:#6d6d6d;letter-spacing:-0.577px;">Stack Frame:</div><div class="a" style="left:834px;top:126px;width:240px;height:22px;background:#333333;border:1px solid #3d3d3d"></div><svg style="left:1064.0px;top:136px;" width="6" height="4" viewBox="0 0 6 4"><path d="M0 0h6l-3.0 4z" fill="#5a5a5a"/></svg><div class="a" style="left:50px;top:162px;width:160.5px;height:2px;background:#7160e8;"></div><div class="a" style="left:50px;top:164px;width:160.5px;height:18px;background:#3b3b3b;"></div><div class="t" style="left:53.5px;top:164.84px;font-size:12px;line-height:16px;height:16px;color:#ffffff;font-weight:bold;letter-spacing:-0.318px;">ProductService.aspx</div><svg style="left:177px;top:169px;" width="10" height="9" viewBox="0 0 10 9"><path d="M0 4.500h4M4 1.500v6M4 2.500h5v4h-5M9 1.500v6" fill="none" stroke="#d0d0d0" stroke-width="1.100"/></svg><svg style="left:196px;top:168.5px;" width="10" height="10" viewBox="0 0 10 10"><path d="M0.500 0.500l8.500 8.500M9 0.500l-8.500 8.500" stroke="#e6e6e6" stroke-width="1.400" fill="none"/></svg><div class="a" style="left:211.5px;top:164px;width:122.5px;height:18px;background:#2b2b2b;"></div><div class="t" style="left:216px;top:164.84px;font-size:12px;line-height:16px;height:16px;color:#b4b4b4;letter-spacing:-0.515px;">DataService.cs</div><div class="a" style="left:335.5px;top:164px;width:167px;height:18px;background:#2b2b2b;"></div><div class="t" style="left:340px;top:164.84px;font-size:12px;line-height:16px;height:16px;color:#b4b4b4;letter-spacing:-0.352px;">ProductService.aspx.cs</div><div class="a" style="left:50px;top:182px;width:1388px;height:2px;background:#7160e8;"></div><div class="a" style="left:50px;top:184px;width:1388px;height:602px;background:#1e1e1e;"></div><div class="a" style="left:50px;top:184px;width:17px;height:602px;background:#333333;"></div><div class="a" style="left:151.5px;top:540.5px;width:1290px;height:17.5px;background:transparent;border:1.500px solid #505050"></div><div class="a" style="left:127px;top:184px;width:5px;height:17px;background:repeating-linear-gradient(135deg,#1b8cf2 0,#1b8cf2 2px,#0a2f5c 2px,#0a2f5c 3.500px);"></div><div class="a" style="left:127px;top:218px;width:5px;height:374px;background:repeating-linear-gradient(135deg,#1b8cf2 0,#1b8cf2 2px,#0a2f5c 2px,#0a2f5c 3.500px);"></div><div class="a" style="left:127px;top:609px;width:5px;height:85px;background:repeating-linear-gradient(135deg,#1b8cf2 0,#1b8cf2 2px,#0a2f5c 2px,#0a2f5c 3.500px);"></div><div class="a" style="left:127px;top:711px;width:5px;height:17px;background:repeating-linear-gradient(135deg,#1b8cf2 0,#1b8cf2 2px,#0a2f5c 2px,#0a2f5c 3.500px);"></div><svg style="left:134px;top:223px;" width="9" height="6" viewBox="0 0 9 6"><path d="M0.500 0.500l4 4l4-4" fill="none" stroke="#c8c8c8" stroke-width="1.100"/></svg><svg style="left:134px;top:240px;" width="9" height="6" viewBox="0 0 9 6"><path d="M0.500 0.500l4 4l4-4" fill="none" stroke="#c8c8c8" stroke-width="1.100"/></svg><svg style="left:134px;top:291px;" width="9" height="6" viewBox="0 0 9 6"><path d="M0.500 0.500l4 4l4-4" fill="none" stroke="#c8c8c8" stroke-width="1.100"/></svg><svg style="left:134px;top:308px;" width="9" height="6" viewBox="0 0 9 6"><path d="M0.500 0.500l4 4l4-4" fill="none" stroke="#c8c8c8" stroke-width="1.100"/></svg><svg style="left:134px;top:342px;" width="9" height="6" viewBox="0 0 9 6"><path d="M0.500 0.500l4 4l4-4" fill="none" stroke="#c8c8c8" stroke-width="1.100"/></svg><svg style="left:134px;top:461px;" width="9" height="6" viewBox="0 0 9 6"><path d="M0.500 0.500l4 4l4-4" fill="none" stroke="#c8c8c8" stroke-width="1.100"/></svg><svg style="left:134px;top:478px;" width="9" height="6" viewBox="0 0 9 6"><path d="M0.500 0.500l4 4l4-4" fill="none" stroke="#c8c8c8" stroke-width="1.100"/></svg><svg style="left:134px;top:614px;" width="9" height="6" viewBox="0 0 9 6"><path d="M0.500 0.500l4 4l4-4" fill="none" stroke="#c8c8c8" stroke-width="1.100"/></svg><div class="a" style="left:138px;top:249px;width:1px;height:40px;background:#555;"></div><div class="a" style="left:138px;top:317px;width:1px;height:23px;background:#555;"></div><div class="a" style="left:138px;top:351px;width:1px;height:108px;background:#555;"></div><div class="a" style="left:138px;top:487px;width:1px;height:125px;background:#555;"></div><div class="a" style="left:138px;top:623px;width:1px;height:112px;background:#555;"></div><div class="a" style="left:138px;top:418px;width:4px;height:1px;background:#555;"></div><div class="a" style="left:138px;top:435px;width:4px;height:1px;background:#555;"></div><div class="a" style="left:138px;top:571px;width:4px;height:1px;background:#555;"></div><div class="a" style="left:138px;top:588px;width:4px;height:1px;background:#555;"></div><div class="a" style="left:138px;top:673px;width:4px;height:1px;background:#555;"></div><div class="a" style="left:138px;top:690px;width:4px;height:1px;background:#555;"></div><div class="a" style="left:138px;top:707px;width:4px;height:1px;background:#555;"></div><div class="a" style="left:138px;top:724px;width:4px;height:1px;background:#555;"></div><div class="ln" style="top:183px;color:#929292">1</div><div class="cl" style="top:183px"><span class="y">&lt;%</span><span class="g">@</span><span class="b"> Page</span><span class="lb"> Language</span><span class="s">="C#"</span><span class="lb"> AutoEventWireup</span><span class="s">="true"</span><span class="lb"> Async</span><span class="s">="true"</span><span class="lb"> MasterPageFile</span><span class="s">="~/Site.Master"</span></div><div class="ln" style="top:200px;color:#929292">2</div><div class="ln" style="top:217px;color:#929292">3</div><div class="cl" style="top:217px"><span class="g">&lt;</span><span class="b">asp:Content</span><span class="lb"> ID</span><span class="s">="BodyContent"</span><span class="lb"> ContentPlaceHolderID</span><span class="s">="MainContent"</span><span class="lb"> runat</span><span class="s">="server"</span><span class="g">&gt;</span></div><div class="ln" style="top:234px;color:#929292">4</div><div class="cl" style="top:234px">    <span class="g">&lt;</span><span class="b">div</span><span class="g">&gt;</span></div><div class="ln" style="top:251px;color:#929292">5</div><div class="cl" style="top:251px">            <span class="g">&lt;</span><span class="b">h1</span><span class="g">&gt;</span><span class="w">Product List</span><span class="g">&lt;/</span><span class="b">h1</span><span class="g">&gt;</span></div><div class="ln" style="top:268px;color:#929292">6</div><div class="ln" style="top:285px;color:#929292">7</div><div class="cl" style="top:285px">            <span class="g">&lt;</span><span class="b">asp:Repeater</span><span class="lb"> ID</span><span class="s">="rptProducts"</span><span class="lb"> runat</span><span class="s">="server"</span><span class="g">&gt;</span></div><div class="ln" style="top:302px;color:#929292">8</div><div class="cl" style="top:302px">                <span class="g">&lt;</span><span class="b">HeaderTemplate</span><span class="g">&gt;</span></div><div class="ln" style="top:319px;color:#929292">9</div><div class="cl" style="top:319px">                    <span class="g">&lt;</span><span class="b">table</span><span class="lb"> border</span><span class="s">="1"</span><span class="g">&gt;</span></div><div class="ln" style="top:336px;color:#929292">10</div><div class="cl" style="top:336px">                        <span class="g">&lt;</span><span class="b">tr</span><span class="g">&gt;</span></div><div class="ln" style="top:353px;color:#929292">11</div><div class="cl" style="top:353px">                            <span class="g">&lt;</span><span class="b">th</span><span class="g">&gt;</span><span class="w">ID</span><span class="g">&lt;/</span><span class="b">th</span><span class="g">&gt;</span></div><div class="ln" style="top:370px;color:#929292">12</div><div class="cl" style="top:370px">                            <span class="g">&lt;</span><span class="b">th</span><span class="g">&gt;</span><span class="w">Name</span><span class="g">&lt;/</span><span class="b">th</span><span class="g">&gt;</span></div><div class="ln" style="top:387px;color:#929292">13</div><div class="cl" style="top:387px">                            <span class="g">&lt;</span><span class="b">th</span><span class="g">&gt;</span><span class="w">Price</span><span class="g">&lt;/</span><span class="b">th</span><span class="g">&gt;</span></div><div class="ln" style="top:404px;color:#929292">14</div><div class="cl" style="top:404px">                        <span class="g">&lt;/</span><span class="b">tr</span><span class="g">&gt;</span></div><div class="ln" style="top:421px;color:#929292">15</div><div class="cl" style="top:421px">                <span class="g">&lt;/</span><span class="b">HeaderTemplate</span><span class="g">&gt;</span></div><div class="ln" style="top:438px;color:#929292">16</div><div class="ln" style="top:455px;color:#929292">17</div><div class="cl" style="top:455px">                <span class="g">&lt;</span><span class="b">ItemTemplate</span><span class="g">&gt;</span></div><div class="ln" style="top:472px;color:#929292">18</div><div class="cl" style="top:472px">                    <span class="g">&lt;</span><span class="b">tr</span><span class="g">&gt;</span></div><div class="ln" style="top:489px;color:#929292">19</div><div class="cl" style="top:489px">                        <span class="g">&lt;</span><span class="b">td</span><span class="g">&gt;</span><span class="y">&lt;%</span><span class="g">#</span><span class="w"> Eval(</span><span class="o">"Id"</span><span class="w">) </span><span class="y">%&gt;</span><span class="g">&lt;/</span><span class="b">td</span><span class="g">&gt;</span></div><div class="ln" style="top:506px;color:#929292">20</div><div class="cl" style="top:506px">                        <span class="g">&lt;</span><span class="b">td</span><span class="g">&gt;</span><span class="y">&lt;%</span><span class="g">#</span><span class="w"> Eval(</span><span class="o">"Name"</span><span class="w">) </span><span class="y">%&gt;</span><span class="g">&lt;/</span><span class="b">td</span><span class="g">&gt;</span></div><div class="ln" style="top:523px;color:#929292">21</div><div class="cl" style="top:523px">                        <span class="g">&lt;</span><span class="b">td</span><span class="g">&gt;</span><span class="y">&lt;%</span><span class="g">#</span><span class="w"> Eval(</span><span class="o">"Price"</span><span class="w">, </span><span class="o">"{0:C}"</span><span class="w">) </span><span class="y">%&gt;</span><span class="g">&lt;/</span><span class="b">td</span><span class="g">&gt;</span></div><div class="ln" style="top:540px;color:#ffffff">22</div><div class="cl" style="top:540px">                        <span class="g">&lt;</span><span class="b">td</span><span class="g">&gt;</span><span class="y">&lt;%</span><span class="g">#</span><span class="w"> Eval(</span><span class="o">"Description"</span><span class="w">) </span><span class="y">%&gt;</span><span class="g">&lt;/</span><span class="b">td</span><span class="g">&gt;</span></div><div class="ln" style="top:557px;color:#929292">23</div><div class="cl" style="top:557px">                    <span class="g">&lt;/</span><span class="b">tr</span><span class="g">&gt;</span></div><div class="ln" style="top:574px;color:#929292">24</div><div class="cl" style="top:574px">                <span class="g">&lt;/</span><span class="b">ItemTemplate</span><span class="g">&gt;</span></div><div class="ln" style="top:591px;color:#929292">25</div><div class="ln" style="top:608px;color:#929292">26</div><div class="cl" style="top:608px">                <span class="g">&lt;</span><span class="b">FooterTemplate</span><span class="g">&gt;</span></div><div class="ln" style="top:625px;color:#929292">27</div><div class="cl" style="top:625px">                    <span class="g">&lt;/</span><span class="b">table</span><span class="g">&gt;</span></div><div class="ln" style="top:642px;color:#929292">28</div><div class="cl" style="top:642px">                   <span class="g">&lt;</span><span class="b">p</span><span class="g">&gt;</span><span class="w">Total Products: </span><span class="y">&lt;%</span><span class="g">#</span><span class="w"> TotalProducts </span><span class="y">%&gt;</span><span class="g">&lt;/</span><span class="b">p</span><span class="g">&gt;</span></div><div class="ln" style="top:659px;color:#929292">29</div><div class="cl" style="top:659px">                <span class="g">&lt;/</span><span class="b">FooterTemplate</span><span class="g">&gt;</span></div><div class="ln" style="top:676px;color:#929292">30</div><div class="cl" style="top:676px">            <span class="g">&lt;/</span><span class="b">asp:Repeater</span><span class="g">&gt;</span></div><div class="ln" style="top:693px;color:#929292">31</div><div class="cl" style="top:693px">        <span class="g">&lt;/</span><span class="b">div</span><span class="g">&gt;</span></div><div class="ln" style="top:710px;color:#929292">32</div><div class="cl" style="top:710px"><span class="g">&lt;/</span><span class="b">asp:Content</span><span class="g">&gt;</span></div><div class="a" style="left:50px;top:786px;width:1388px;height:15px;background:#2a2a2a;"></div><div class="a" style="left:50px;top:786px;width:59px;height:15px;background:#333333;border:1px solid #3d3d3d"></div><div class="t" style="left:52px;top:785.84px;font-size:12px;line-height:16px;height:16px;color:#f0f0f0;letter-spacing:-1.256px;">100 %</div><svg style="left:100.5px;top:792px;" width="6" height="4" viewBox="0 0 6 4"><path d="M0 0h6l-3.0 4z" fill="#d0d0d0"/></svg><svg style="left:133.5px;top:788.5px;" width="11" height="11" viewBox="0 0 11 11"><circle cx="5.500" cy="5.500" r="5.500" fill="#5ccf6b"/><path d="M2.800 5.700l2 2l3.500-4" fill="none" stroke="#1e1e1e" stroke-width="1.400"/></svg><div class="t" style="left:150px;top:785.84px;font-size:12px;line-height:16px;height:16px;color:#f0f0f0;letter-spacing:-0.218px;">No issues found</div><div class="a" style="left:304px;top:786px;width:1134px;height:15px;background:#2e2e2e;"></div><svg style="left:310px;top:790px;" width="5" height="8" viewBox="0 0 5 8"><path d="M5 0v8l-5-4z" fill="#b0b0b0"/></svg><div class="a" style="left:49px;top:801px;width:1px;height:26px;background:#3d3d3d;"></div><div class="a" style="left:49px;top:826px;width:1389px;height:1px;background:#3d3d3d;"></div><svg style="left:60px;top:809px;" width="9" height="9" viewBox="0 0 9 9"><path d="M0.500 0.500h6v6h-6z" fill="none" stroke="#e0e0e0" stroke-width="1"/><path d="M3 3h5.500v5.500h-5.500z" fill="#1f1f1f" stroke="#e0e0e0" stroke-width="1"/></svg><div class="t" style="left:75px;top:806.34px;font-size:12px;line-height:16px;height:16px;color:#fafafa;letter-spacing:-0.371px;">Design</div><div class="a" style="left:121px;top:806px;width:1.5px;height:15px;background:#e0e0e0;"></div><svg style="left:129px;top:809px;" width="9" height="9" viewBox="0 0 9 9"><rect x="0.500" y="0.500" width="8" height="8" rx="1.500" fill="none" stroke="#e0e0e0" stroke-width="1"/><path d="M2.500 3.500h4M2.500 5.500h4" stroke="#e0e0e0" stroke-width="1"/></svg><div class="t" style="left:144px;top:806.34px;font-size:12px;line-height:16px;height:16px;color:#fafafa;letter-spacing:0.039px;">Split</div><div class="a" style="left:179px;top:803px;width:69px;height:21px;background:#1f1f1f;border:1px solid #7160e8"></div><svg style="left:185px;top:810px;" width="9" height="7" viewBox="0 0 9 7"><path d="M3.500 0.500l-3 3l3 3M5.500 0.500l3 3l-3 3" fill="none" stroke="#e0e0e0" stroke-width="1.300"/><circle cx="4.500" cy="3.500" r="1.200" fill="#e0e0e0"/></svg><div class="t" style="left:200px;top:806.34px;font-size:12px;line-height:16px;height:16px;color:#fafafa;letter-spacing:-0.505px;">Source</div><div class="a" style="left:49px;top:833px;width:351px;height:105px;background:#1f1f1f;border:1px solid #3d3d3d"></div><div class="t" style="left:54px;top:837.34px;font-size:12px;line-height:16px;height:16px;color:#c8c8c8;letter-spacing:-0.172px;">Autos</div><svg style="left:351.0px;top:842px;" width="8" height="4" viewBox="0 0 8 4"><path d="M0 0h8l-4.0 4z" fill="#d6d6d6"/></svg><svg style="left:367px;top:838px;" width="9" height="12" viewBox="0 0 9 12"><path d="M2.500 0.500h4M3 0.500v5.500M6 0.500v5.500M1 6.500h7M4.500 6.500v5" fill="none" stroke="#e0e0e0" stroke-width="1.200"/></svg><svg style="left:383px;top:839px;" width="10" height="10" viewBox="0 0 10 10"><path d="M0.500 0.500l8.500 8.500M9 0.500l-8.500 8.500" stroke="#e6e6e6" stroke-width="1.400" fill="none"/></svg><div class="a" style="left:52px;top:857.5px;width:168px;height:20.5px;background:#383838;border:1px solid #424242"></div><div class="t" style="left:57.5px;top:860.34px;font-size:12px;line-height:16px;height:16px;color:#e0e0e0;letter-spacing:-0.359px;">Search (Ctrl+E)</div><svg style="left:191px;top:861px;" width="14" height="14" viewBox="0 0 14 14"><circle cx="9" cy="5" r="3.600" fill="none" stroke="#e0e0e0" stroke-width="1.500"/><path d="M6.500 7.500L1.500 12.500" stroke="#e0e0e0" stroke-width="2"/></svg><svg style="left:209.5px;top:866px;" width="6" height="4" viewBox="0 0 6 4"><path d="M0 0h6l-3.0 4z" fill="#d0d0d0"/></svg><svg style="left:230px;top:863px;" width="13" height="10" viewBox="0 0 13 10"><path d="M13 5h-12M5.500 0.500l-4.500 4.500l4.500 4.500" fill="none" stroke="#5a5a5a" stroke-width="1.200"/></svg><svg style="left:253px;top:863px;" width="13" height="10" viewBox="0 0 13 10"><path d="M0 5h12M7.500 0.500l4.500 4.500l-4.500 4.500" fill="none" stroke="#5a5a5a" stroke-width="1.200"/></svg><div class="t" style="left:273.5px;top:860.84px;font-size:12px;line-height:16px;height:16px;color:#6d6d6d;letter-spacing:-0.351px;">Search Depth:</div><div class="a" style="left:352px;top:858.5px;width:40px;height:19.5px;background:#333333;border:1px solid #3d3d3d"></div><div class="t" style="left:356px;top:860.84px;font-size:12px;line-height:16px;height:16px;color:#5a5a5a;">3</div><svg style="left:382.0px;top:866.5px;" width="6" height="4" viewBox="0 0 6 4"><path d="M0 0h6l-3.0 4z" fill="#5a5a5a"/></svg><div class="a" style="left:50px;top:881px;width:332px;height:1px;background:#2d2d2d;"></div><div class="a" style="left:50px;top:900px;width:332px;height:1px;background:#3d3d3d;"></div><div class="a" style="left:58px;top:881px;width:1px;height:20px;background:#3d3d3d;"></div><div class="a" style="left:166px;top:881px;width:1px;height:20px;background:#3d3d3d;"></div><div class="a" style="left:328px;top:881px;width:1px;height:20px;background:#3d3d3d;"></div><div class="t" style="left:64px;top:883.34px;font-size:12px;line-height:16px;height:16px;color:#7a7a7a;letter-spacing:-0.337px;">Name</div><div class="t" style="left:172px;top:883.34px;font-size:12px;line-height:16px;height:16px;color:#7a7a7a;letter-spacing:-0.326px;">Value</div><div class="t" style="left:334px;top:883.34px;font-size:12px;line-height:16px;height:16px;color:#7a7a7a;letter-spacing:-0.172px;">Type</div><div class="a" style="left:382px;top:881px;width:17px;height:56px;background:#2e2e2e;"></div><svg style="left:386px;top:886px;" width="9" height="5" viewBox="0 0 9 5"><path d="M0 5h9l-4.500-5z" fill="#999"/></svg><svg style="left:386px;top:926px;" width="9" height="5" viewBox="0 0 9 5"><path d="M0 0h9l-4.500 5z" fill="#999"/></svg><div class="a" style="left:386px;top:898px;width:9px;height:22px;background:#3c3c3c;"></div><div class="a" style="left:49px;top:937px;width:43px;height:21px;background:#1f1f1f;border:1px solid #3d3d3d;border-top:none"></div><div class="t" style="left:54.5px;top:939.34px;font-size:12px;line-height:16px;height:16px;color:#ffffff;letter-spacing:-0.047px;">Autos</div><div class="t" style="left:98px;top:939.34px;font-size:12px;line-height:16px;height:16px;color:#c0c0c0;letter-spacing:-0.338px;">Locals</div><div class="t" style="left:143px;top:939.34px;font-size:12px;line-height:16px;height:16px;color:#c0c0c0;letter-spacing:-0.178px;">Watch 1</div><div class="a" style="left:406px;top:833px;width:1032px;height:105px;background:#1f1f1f;border:1px solid #3d3d3d"></div><div class="t" style="left:411px;top:837.34px;font-size:12px;line-height:16px;height:16px;color:#c8c8c8;letter-spacing:0.395px;">Output</div><div class="a" style="left:407px;top:857.5px;width:1030px;height:24px;background:#252526;"></div><div class="t" style="left:414.5px;top:860.84px;font-size:12px;line-height:16px;height:16px;color:#f0f0f0;letter-spacing:-0.024px;">Show output from:</div><div class="a" style="left:407px;top:881.5px;width:1030px;height:1px;background:#2a2a2a;"></div><div class="a" style="left:407px;top:881.500px;width:1030px;height:40px;overflow:hidden"><div class="t mono" style="left:13px;top:-4.700px;font-size:11.600px;line-height:15px;color:#e6e6e6;white-space:pre">The thread 34192 has exited with code 0 (0x0).
The thread 8592 has exited with code 0 (0x0).</div></div><div class="a" style="left:407px;top:921.5px;width:1030px;height:15px;background:#2e2e2e;"></div><svg style="left:413px;top:925px;" width="5" height="8" viewBox="0 0 5 8"><path d="M5 0v8l-5-4z" fill="#b0b0b0"/></svg><div class="a" style="left:424px;top:925.5px;width:429px;height:7px;background:#4d4d4d;"></div><div class="t" style="left:412px;top:939.34px;font-size:12px;line-height:16px;height:16px;color:#c0c0c0;letter-spacing:-0.249px;">Developer PowerShell</div><div class="t" style="left:538.5px;top:939.34px;font-size:12px;line-height:16px;height:16px;color:#c0c0c0;letter-spacing:-0.447px;">Call Stack</div><div class="t" style="left:601px;top:939.34px;font-size:12px;line-height:16px;height:16px;color:#c0c0c0;letter-spacing:-0.137px;">Breakpoints</div><div class="t" style="left:675px;top:939.34px;font-size:12px;line-height:16px;height:16px;color:#c0c0c0;letter-spacing:-0.2px;">Exception Settings</div><div class="t" style="left:783.5px;top:939.34px;font-size:12px;line-height:16px;height:16px;color:#c0c0c0;letter-spacing:0.202px;">Command Window</div><div class="t" style="left:899px;top:939.34px;font-size:12px;line-height:16px;height:16px;color:#c0c0c0;letter-spacing:0.131px;">Immediate Window</div><div class="a" style="left:1009px;top:937px;width:49.5px;height:21px;background:#1f1f1f;border:1px solid #3d3d3d;border-top:none"></div><div class="t" style="left:1015px;top:939.34px;font-size:12px;line-height:16px;height:16px;color:#ffffff;letter-spacing:0.395px;">Output</div><div class="a" style="left:1437px;top:161px;width:458px;height:787px;background:#1f1f1f;border:1px solid #3d3d3d;border-radius:0 8px 7px 7px"></div><div class="t" style="left:1441.5px;top:164.84px;font-size:12px;line-height:16px;height:16px;color:#c8c8c8;letter-spacing:-0.18px;">Solution Explorer</div><svg style="left:1845.0px;top:169.5px;" width="8" height="4" viewBox="0 0 8 4"><path d="M0 0h8l-4.0 4z" fill="#d6d6d6"/></svg><svg style="left:1862px;top:168px;" width="9" height="9" viewBox="0 0 9 9"><path d="M0.500 0.500h8v8h-8z" fill="none" stroke="#e0e0e0" stroke-width="1.100"/><path d="M0.500 1.500h8" stroke="#e0e0e0" stroke-width="2"/></svg><svg style="left:1879px;top:168px;" width="9" height="9" viewBox="0 0 9 9"><path d="M0.500 0.500l8 8M8.500 0.500l-8 8" stroke="#e6e6e6" stroke-width="1.400" fill="none"/></svg><svg style="left:1476.0px;top:189.5px;" width="16" height="16" viewBox="0 0 16 16"><circle cx="9" cy="9" r="5.500" fill="none" stroke="#d6d6d6" stroke-width="1.200"/><path d="M9 5.500v4h3" fill="none" stroke="#d6d6d6" stroke-width="1.100"/><path d="M0.500 0.500h5l-2 2.500v3l-1-1v-2z" fill="#55aaff"/></svg><svg style="left:1497.5px;top:196px;" width="6" height="4" viewBox="0 0 6 4"><path d="M0 0h6l-3.0 4z" fill="#d0d0d0"/></svg><svg style="left:1509.5px;top:189.5px;" width="16" height="16" viewBox="0 0 16 16"><path d="M8 1.500a6.500 6.500 0 1 1-5 2.300" fill="none" stroke="#4a4a4a" stroke-width="1.300"/><path d="M1.500 1v3.500h3.500" fill="none" stroke="#4a4a4a" stroke-width="1.300"/></svg><svg style="left:1531.5px;top:189.5px;" width="16" height="16" viewBox="0 0 16 16"><path d="M3 8l5-5l5 5M3 13l5-5l5 5" fill="none" stroke="#d6d6d6" stroke-width="1.300"/></svg><div class="a" style="left:1551px;top:185px;width:22px;height:24px;background:#2b2b2b;border:1px solid #7160e8"></div><svg style="left:1554.0px;top:189.0px;" width="16" height="16" viewBox="0 0 16 16"><path d="M2.500 4.500h7v9h-7z" fill="none" stroke="#d6d6d6" stroke-width="1.100"/><path d="M5.500 4v-2.500h8v9h-3.500" fill="none" stroke="#d6d6d6" stroke-width="1.100"/><path d="M4.500 6.500h3v5h-3z" fill="#6b6b6b"/></svg><div class="a" style="left:1576px;top:188px;width:1px;height:18px;background:#3f3f3f;"></div><div class="a" style="left:1582px;top:185px;width:22px;height:24px;background:#2b2b2b;border:1px solid #7160e8"></div><svg style="left:1585.0px;top:189.0px;" width="16" height="16" viewBox="0 0 16 16"><path d="M2.500 2.500h3v3h-3zM7.500 6.500h3v3h-3zM11 11.500h3v3h-3z" fill="none" stroke="#d6d6d6" stroke-width="1.100"/><path d="M4 5.500v2.500h3.500M9 9.500v3.500h2" fill="none" stroke="#d6d6d6" stroke-width="1"/></svg><svg style="left:1607.0px;top:196px;" width="6" height="4" viewBox="0 0 6 4"><path d="M0 0h6l-3.0 4z" fill="#d0d0d0"/></svg><div class="a" style="left:1619px;top:188px;width:1px;height:18px;background:#3f3f3f;"></div><svg style="left:1626.5px;top:189.5px;" width="16" height="16" viewBox="0 0 16 16"><path d="M6 5l-3 3l3 3M10 5l3 3l-3 3" fill="none" stroke="#d6d6d6" stroke-width="1.200"/></svg><svg style="left:1648.5px;top:189.5px;" width="16" height="16" viewBox="0 0 16 16"><path d="M10.500 1a4 4 0 0 0-3.700 5.600L1.500 12a1.600 1.600 0 0 0 2.400 2.400l5.400-5.300A4 4 0 0 0 14.800 4.500l-2.500 2.500l-2.300-0.500l-0.500-2.300l2.500-2.500a4 4 0 0 0-1.500-0.700z" fill="#d6d6d6"/></svg><div class="a" style="left:1668px;top:185px;width:22px;height:24px;background:#2b2b2b;border:1px solid #7160e8"></div><svg style="left:1671.0px;top:189.5px;" width="16" height="16" viewBox="0 0 16 16"><path d="M2.500 11.500h8v-2.500h3" fill="none" stroke="#d6d6d6" stroke-width="1.200"/><path d="M2.500 9.500h8v2.500h-8z" fill="none" stroke="#d6d6d6" stroke-width="1"/><path d="M13 4.500l1.500-1.500M12 3v-1.500M14.500 6h1" stroke="#e8c27a" stroke-width="1"/></svg><div class="a" style="left:1438px;top:211px;width:453px;height:21px;background:#383838;border:1px solid #424242"></div><div class="t" style="left:1441px;top:213.84px;font-size:12px;line-height:16px;height:16px;color:#d0d0d0;letter-spacing:-0.049px;">Search Solution Explorer (Ctrl+;)</div><svg style="left:1862px;top:214px;" width="14" height="14" viewBox="0 0 14 14"><circle cx="9" cy="5" r="3.600" fill="none" stroke="#e0e0e0" stroke-width="1.500"/><path d="M6.500 7.500L1.500 12.500" stroke="#e0e0e0" stroke-width="2"/></svg><svg style="left:1881.0px;top:220px;" width="6" height="4" viewBox="0 0 6 4"><path d="M0 0h6l-3.0 4z" fill="#d0d0d0"/></svg><div class="a" style="left:1876px;top:233px;width:17.5px;height:694px;background:#2e2e2e;"></div><svg style="left:1880.5px;top:240px;" width="9" height="5" viewBox="0 0 9 5"><path d="M0 5h9l-4.500-5z" fill="#999"/></svg><svg style="left:1880.5px;top:915px;" width="9" height="5" viewBox="0 0 9 5"><path d="M0 0h9l-4.500 5z" fill="#999"/></svg><div class="a" style="left:1880px;top:557px;width:9px;height:326px;background:#4d4d4d;"></div><div class="a" style="left:1438px;top:576.5px;width:439px;height:18px;background:#383838;"></div><div class="a" style="left:0;top:233px;width:1877px;height:694px;overflow:hidden"><div class="a" style="left:0;top:-233px"><svg style="left:1506.5px;top:237px;" width="14" height="12" viewBox="0 0 14 12"><path d="M0.500 11.500v-10.500h5l1.500 2h6.500v8.500z" fill="#6e5a36" stroke="#dcb67a" stroke-width="1"/><path d="M0.500 3.500h13" stroke="#dcb67a" stroke-width="1"/></svg><div class="t" style="left:1527px;top:236.14px;font-size:12px;line-height:16px;height:16px;color:#f0f0f0;letter-spacing:-0.411px;">App_Data</div><svg style="left:1485.0px;top:259.5px;" width="6" height="6" viewBox="0 0 6 6"><path d="M6 0v6h-6z" fill="#e8e8e8"/></svg><svg style="left:1506.5px;top:256px;" width="14" height="12" viewBox="0 0 14 12"><path d="M0.500 11.500v-10.500h5l1.500 2h6.500v8.500z" fill="#6e5a36" stroke="#dcb67a" stroke-width="1"/><path d="M0.500 3.500h13" stroke="#dcb67a" stroke-width="1"/></svg><div class="t" style="left:1527px;top:255.14px;font-size:12px;line-height:16px;height:16px;color:#f0f0f0;letter-spacing:-0.296px;">App_Start</div><svg style="left:1503px;top:276px;" width="6" height="10" viewBox="0 0 6 10"><path d="M0.500 0.500v9l4.500-4.500z" fill="none" stroke="#d0d0d0" stroke-width="1"/></svg><svg style="left:1514.5px;top:276.5px;" width="6" height="9" viewBox="0 0 6 9"><path d="M1.500 4v-1.800a1.500 1.500 0 0 1 3 0v1.800" fill="none" stroke="#4aa3ff" stroke-width="1.100"/><rect x="0.550" y="4" width="4.900" height="4.400" fill="none" stroke="#4aa3ff" stroke-width="1.100"/></svg><div class="t" style="left:1524px;top:274.5px;font-size:11.500px;line-height:13px;font-weight:bold;color:#5fcf7f;letter-spacing:-0.300px">C#</div><div class="t" style="left:1545.5px;top:274.14px;font-size:12px;line-height:16px;height:16px;color:#f0f0f0;letter-spacing:-0.099px;">BundleConfig.cs</div><svg style="left:1503px;top:295px;" width="6" height="10" viewBox="0 0 6 10"><path d="M0.500 0.500v9l4.500-4.500z" fill="none" stroke="#d0d0d0" stroke-width="1"/></svg><svg style="left:1514.5px;top:295.5px;" width="6" height="9" viewBox="0 0 6 9"><path d="M1.500 4v-1.800a1.500 1.500 0 0 1 3 0v1.800" fill="none" stroke="#4aa3ff" stroke-width="1.100"/><rect x="0.550" y="4" width="4.900" height="4.400" fill="none" stroke="#4aa3ff" stroke-width="1.100"/></svg><div class="t" style="left:1524px;top:293.5px;font-size:11.500px;line-height:13px;font-weight:bold;color:#5fcf7f;letter-spacing:-0.300px">C#</div><div class="t" style="left:1545.5px;top:293.14px;font-size:12px;line-height:16px;height:16px;color:#f0f0f0;letter-spacing:-0.157px;">RouteConfig.cs</div><svg style="left:1485.0px;top:316.5px;" width="6" height="6" viewBox="0 0 6 6"><path d="M6 0v6h-6z" fill="#e8e8e8"/></svg><svg style="left:1506.5px;top:313px;" width="14" height="12" viewBox="0 0 14 12"><path d="M0.500 11.500v-10.500h5l1.500 2h6.500v8.500z" fill="none" stroke="#c0c0c0" stroke-width="1" stroke-dasharray="1.200 1.200"/></svg><div class="t" style="left:1527px;top:312.14px;font-size:12px;line-height:16px;height:16px;color:#f0f0f0;letter-spacing:0.093px;">bin</div><svg style="left:1526.5px;top:331.5px;" width="11" height="13" viewBox="0 0 11 13"><path d="M0.500 0.500h6.500l3.500 3.500v8.500h-10z" fill="none" stroke="#c0c0c0" stroke-width="1" stroke-dasharray="1.200 1.200"/></svg><div class="t" style="left:1545.5px;top:331.14px;font-size:12px;line-height:16px;height:16px;color:#f0f0f0;letter-spacing:-0.209px;">ProductService.Classic.dll</div><svg style="left:1526.5px;top:350.5px;" width="11" height="13" viewBox="0 0 11 13"><path d="M0.500 0.500h6.500l3.500 3.500v8.500h-10z" fill="none" stroke="#c0c0c0" stroke-width="1" stroke-dasharray="1.200 1.200"/></svg><div class="t" style="left:1545.5px;top:350.14px;font-size:12px;line-height:16px;height:16px;color:#f0f0f0;letter-spacing:-0.229px;">ProductService.Classic.pdb</div><svg style="left:1485.5px;top:371px;" width="6" height="10" viewBox="0 0 6 10"><path d="M0.500 0.500v9l4.500-4.500z" fill="none" stroke="#d0d0d0" stroke-width="1"/></svg><svg style="left:1506.5px;top:370px;" width="14" height="12" viewBox="0 0 14 12"><path d="M0.500 11.500v-10.500h5l1.500 2h6.500v8.500z" fill="#6e5a36" stroke="#dcb67a" stroke-width="1"/><path d="M0.500 3.500h13" stroke="#dcb67a" stroke-width="1"/></svg><div class="t" style="left:1527px;top:369.14px;font-size:12px;line-height:16px;height:16px;color:#f0f0f0;letter-spacing:0.162px;">Content</div><svg style="left:1485.5px;top:390px;" width="6" height="10" viewBox="0 0 6 10"><path d="M0.500 0.500v9l4.500-4.500z" fill="none" stroke="#d0d0d0" stroke-width="1"/></svg><svg style="left:1506.5px;top:389px;" width="14" height="12" viewBox="0 0 14 12"><path d="M0.500 11.500v-10.500h5l1.500 2h6.500v8.500z" fill="none" stroke="#c0c0c0" stroke-width="1" stroke-dasharray="1.200 1.200"/></svg><div class="t" style="left:1527px;top:388.14px;font-size:12px;line-height:16px;height:16px;color:#f0f0f0;letter-spacing:0.493px;">obj</div><svg style="left:1485.5px;top:409px;" width="6" height="10" viewBox="0 0 6 10"><path d="M0.500 0.500v9l4.500-4.500z" fill="none" stroke="#d0d0d0" stroke-width="1"/></svg><svg style="left:1506.5px;top:408px;" width="14" height="12" viewBox="0 0 14 12"><path d="M0.500 11.500v-10.500h5l1.500 2h6.500v8.500z" fill="#6e5a36" stroke="#dcb67a" stroke-width="1"/><path d="M0.500 3.500h13" stroke="#dcb67a" stroke-width="1"/></svg><div class="t" style="left:1527px;top:407.14px;font-size:12px;line-height:16px;height:16px;color:#f0f0f0;letter-spacing:-0.329px;">Scripts</div><svg style="left:1485.5px;top:428px;" width="6" height="10" viewBox="0 0 6 10"><path d="M0.500 0.500v9l4.500-4.500z" fill="none" stroke="#d0d0d0" stroke-width="1"/></svg><svg style="left:1496.5px;top:428.5px;" width="6" height="9" viewBox="0 0 6 9"><path d="M1.500 4v-1.800a1.500 1.500 0 0 1 3 0v1.800" fill="none" stroke="#4aa3ff" stroke-width="1.100"/><rect x="0.550" y="4" width="4.900" height="4.400" fill="none" stroke="#4aa3ff" stroke-width="1.100"/></svg><svg style="left:1505.5px;top:425px;" width="16" height="16" viewBox="0 0 16 16"><path d="M4.500 6.500v-5h6.500l3 3v9.500h-4.500" fill="none" stroke="#c4c4c4" stroke-width="1.100"/><circle cx="5" cy="11" r="4.300" fill="#1f1f1f" stroke="#4aa3ff" stroke-width="1.100"/><path d="M0.700 11h8.600M5 6.700c-2.500 2.500-2.500 6 0 8.600M5 6.700c2.500 2.500 2.500 6 0 8.600" fill="none" stroke="#4aa3ff" stroke-width="0.900"/></svg><div class="t" style="left:1527px;top:426.14px;font-size:12px;line-height:16px;height:16px;color:#f0f0f0;letter-spacing:-0.049px;">About.aspx</div><svg style="left:1496.5px;top:447.5px;" width="6" height="9" viewBox="0 0 6 9"><path d="M1.500 4v-1.800a1.500 1.500 0 0 1 3 0v1.800" fill="none" stroke="#4aa3ff" stroke-width="1.100"/><rect x="0.550" y="4" width="4.900" height="4.400" fill="none" stroke="#4aa3ff" stroke-width="1.100"/></svg><svg style="left:1505.5px;top:444px;" width="16" height="16" viewBox="0 0 16 16"><path d="M4.500 4.500v-3h6.500l3 3v9.500h-3.500" fill="none" stroke="#c4c4c4" stroke-width="1.100"/><path d="M4.200 9.200L8.700 14" stroke="#e8e8e8" stroke-width="2.300" stroke-linecap="round"/><path d="M4.800 5.300a3 3 0 1 0 1.800 4.500l-2.300-0.300l-1-1.700z" fill="#e8e8e8"/></svg><div class="t" style="left:1527px;top:445.14px;font-size:12px;line-height:16px;height:16px;color:#f0f0f0;letter-spacing:0.106px;">Bundle.config</div><svg style="left:1485.5px;top:466px;" width="6" height="10" viewBox="0 0 6 10"><path d="M0.500 0.500v9l4.500-4.500z" fill="none" stroke="#d0d0d0" stroke-width="1"/></svg><svg style="left:1496.5px;top:466.5px;" width="6" height="9" viewBox="0 0 6 9"><path d="M1.500 4v-1.800a1.500 1.500 0 0 1 3 0v1.800" fill="none" stroke="#4aa3ff" stroke-width="1.100"/><rect x="0.550" y="4" width="4.900" height="4.400" fill="none" stroke="#4aa3ff" stroke-width="1.100"/></svg><svg style="left:1505.5px;top:463px;" width="16" height="16" viewBox="0 0 16 16"><path d="M4.500 6.500v-5h6.500l3 3v9.500h-4.500" fill="none" stroke="#c4c4c4" stroke-width="1.100"/><circle cx="5" cy="11" r="4.300" fill="#1f1f1f" stroke="#4aa3ff" stroke-width="1.100"/><path d="M0.700 11h8.600M5 6.700c-2.500 2.500-2.500 6 0 8.600M5 6.700c2.500 2.500 2.500 6 0 8.600" fill="none" stroke="#4aa3ff" stroke-width="0.900"/></svg><div class="t" style="left:1527px;top:464.14px;font-size:12px;line-height:16px;height:16px;color:#f0f0f0;letter-spacing:-0.094px;">Contact.aspx</div><svg style="left:1485.5px;top:485px;" width="6" height="10" viewBox="0 0 6 10"><path d="M0.500 0.500v9l4.500-4.500z" fill="none" stroke="#d0d0d0" stroke-width="1"/></svg><svg style="left:1496.5px;top:487.5px;" width="6" height="6" viewBox="0 0 6 6"><path d="M3 0v6M0 3h6" stroke="#4fbf5f" stroke-width="1.100"/></svg><div class="t" style="left:1505.5px;top:483.5px;font-size:11.500px;line-height:13px;font-weight:bold;color:#5fcf7f;letter-spacing:-0.300px">C#</div><div class="t" style="left:1527px;top:483.14px;font-size:12px;line-height:16px;height:16px;color:#f0f0f0;letter-spacing:-0.461px;">DataService.cs</div><svg style="left:1485.5px;top:504px;" width="6" height="10" viewBox="0 0 6 10"><path d="M0.500 0.500v9l4.500-4.500z" fill="none" stroke="#d0d0d0" stroke-width="1"/></svg><svg style="left:1496.5px;top:504.5px;" width="6" height="9" viewBox="0 0 6 9"><path d="M1.500 4v-1.800a1.500 1.500 0 0 1 3 0v1.800" fill="none" stroke="#4aa3ff" stroke-width="1.100"/><rect x="0.550" y="4" width="4.900" height="4.400" fill="none" stroke="#4aa3ff" stroke-width="1.100"/></svg><svg style="left:1505.5px;top:501px;" width="16" height="16" viewBox="0 0 16 16"><path d="M4.500 6.500v-5h6.500l3 3v9.500h-4.500" fill="none" stroke="#c4c4c4" stroke-width="1.100"/><circle cx="5" cy="11" r="4.300" fill="#1f1f1f" stroke="#4aa3ff" stroke-width="1.100"/><path d="M0.700 11h8.600M5 6.700c-2.500 2.500-2.500 6 0 8.600M5 6.700c2.500 2.500 2.500 6 0 8.600" fill="none" stroke="#4aa3ff" stroke-width="0.900"/></svg><div class="t" style="left:1527px;top:502.14px;font-size:12px;line-height:16px;height:16px;color:#f0f0f0;letter-spacing:-0.191px;">Default.aspx</div><svg style="left:1496.5px;top:523.5px;" width="6" height="9" viewBox="0 0 6 9"><path d="M1.500 4v-1.800a1.500 1.500 0 0 1 3 0v1.800" fill="none" stroke="#4aa3ff" stroke-width="1.100"/><rect x="0.550" y="4" width="4.900" height="4.400" fill="none" stroke="#4aa3ff" stroke-width="1.100"/></svg><svg style="left:1505.5px;top:520px;" width="16" height="16" viewBox="0 0 16 16"><path d="M2.500 1.500h8l3 3v10h-11z" fill="none" stroke="#d0d0d0" stroke-width="1.100"/><path d="M8 6l1 2.500h2.500l-2 1.500l0.800 2.500l-2.300-1.500l-2.300 1.500l0.800-2.500l-2-1.500h2.500z" fill="#d0d0d0"/></svg><div class="t" style="left:1527px;top:521.14px;font-size:12px;line-height:16px;height:16px;color:#f0f0f0;letter-spacing:0.13px;">favicon.ico</div><svg style="left:1485.5px;top:542px;" width="6" height="10" viewBox="0 0 6 10"><path d="M0.500 0.500v9l4.500-4.500z" fill="none" stroke="#d0d0d0" stroke-width="1"/></svg><svg style="left:1496.5px;top:542.5px;" width="6" height="9" viewBox="0 0 6 9"><path d="M1.500 4v-1.800a1.500 1.500 0 0 1 3 0v1.800" fill="none" stroke="#4aa3ff" stroke-width="1.100"/><rect x="0.550" y="4" width="4.900" height="4.400" fill="none" stroke="#4aa3ff" stroke-width="1.100"/></svg><svg style="left:1505.5px;top:539px;" width="16" height="16" viewBox="0 0 16 16"><path d="M4.500 7v-5.500h6.500l3 3v9.500h-5.500" fill="none" stroke="#c4c4c4" stroke-width="1.100"/><circle cx="4" cy="12" r="2" fill="none" stroke="#d0d0d0" stroke-width="1.300"/><circle cx="4" cy="12" r="3.300" fill="none" stroke="#d0d0d0" stroke-width="1.200" stroke-dasharray="1.300 1.290"/></svg><div class="t" style="left:1527px;top:540.14px;font-size:12px;line-height:16px;height:16px;color:#f0f0f0;letter-spacing:-0.377px;">Global.asax</div><svg style="left:1496.5px;top:561.5px;" width="6" height="9" viewBox="0 0 6 9"><path d="M1.500 4v-1.800a1.500 1.500 0 0 1 3 0v1.800" fill="none" stroke="#4aa3ff" stroke-width="1.100"/><rect x="0.550" y="4" width="4.900" height="4.400" fill="none" stroke="#4aa3ff" stroke-width="1.100"/></svg><svg style="left:1505.5px;top:558px;" width="16" height="16" viewBox="0 0 16 16"><path d="M4.500 4.500v-3h6.500l3 3v9.500h-3.500" fill="none" stroke="#c4c4c4" stroke-width="1.100"/><path d="M4.200 9.200L8.700 14" stroke="#e8e8e8" stroke-width="2.300" stroke-linecap="round"/><path d="M4.800 5.300a3 3 0 1 0 1.800 4.500l-2.300-0.300l-1-1.700z" fill="#e8e8e8"/></svg><div class="t" style="left:1527px;top:559.14px;font-size:12px;line-height:16px;height:16px;color:#f0f0f0;letter-spacing:-0.066px;">packages.config</div><svg style="left:1485.0px;top:582.5px;" width="6" height="6" viewBox="0 0 6 6"><path d="M6 0v6h-6z" fill="#e8e8e8"/></svg><svg style="left:1495.5px;top:582px;" width="8" height="7" viewBox="0 0 8 7"><path d="M0.500 3.500l2.500 2.500l4.500-5.500" fill="none" stroke="#e0525f" stroke-width="1.400"/></svg><svg style="left:1505.5px;top:577px;" width="16" height="16" viewBox="0 0 16 16"><path d="M4.500 6.500v-5h6.500l3 3v9.500h-4.500" fill="none" stroke="#c4c4c4" stroke-width="1.100"/><circle cx="5" cy="11" r="4.300" fill="#1f1f1f" stroke="#4aa3ff" stroke-width="1.100"/><path d="M0.700 11h8.600M5 6.700c-2.500 2.500-2.500 6 0 8.600M5 6.700c2.500 2.500 2.500 6 0 8.600" fill="none" stroke="#4aa3ff" stroke-width="0.900"/></svg><div class="t" style="left:1527px;top:578.14px;font-size:12px;line-height:16px;height:16px;color:#f0f0f0;letter-spacing:-0.264px;">ProductService.aspx</div><svg style="left:1503px;top:599px;" width="6" height="10" viewBox="0 0 6 10"><path d="M0.500 0.500v9l4.500-4.500z" fill="none" stroke="#d0d0d0" stroke-width="1"/></svg><svg style="left:1513.5px;top:601px;" width="8" height="7" viewBox="0 0 8 7"><path d="M0.500 3.500l2.500 2.500l4.500-5.500" fill="none" stroke="#e0525f" stroke-width="1.400"/></svg><svg style="left:1524px;top:596px;" width="16" height="16" viewBox="0 0 16 16"><path d="M5.500 4.500h5l3 3v7h-8z" fill="none" stroke="#d0d0d0" stroke-width="1.100"/><path d="M0.500 2.500h5M3.500 0.500l2 2l-2 2" fill="none" stroke="#4aa3ff" stroke-width="1.200"/></svg><div class="t" style="left:1545.5px;top:597.14px;font-size:12px;line-height:16px;height:16px;color:#f0f0f0;letter-spacing:-0.333px;">ProductService.aspx.cs</div><svg style="left:1503px;top:618px;" width="6" height="10" viewBox="0 0 6 10"><path d="M0.500 0.500v9l4.500-4.500z" fill="none" stroke="#d0d0d0" stroke-width="1"/></svg><svg style="left:1513.5px;top:620px;" width="8" height="7" viewBox="0 0 8 7"><path d="M0.500 3.500l2.500 2.500l4.500-5.500" fill="none" stroke="#e0525f" stroke-width="1.400"/></svg><svg style="left:1524px;top:615px;" width="16" height="16" viewBox="0 0 16 16"><path d="M5.500 4.500h5l3 3v7h-8z" fill="none" stroke="#d0d0d0" stroke-width="1.100"/><path d="M0.500 2.500h5M3.500 0.500l2 2l-2 2" fill="none" stroke="#4aa3ff" stroke-width="1.200"/></svg><div class="t" style="left:1545.5px;top:616.14px;font-size:12px;line-height:16px;height:16px;color:#f0f0f0;letter-spacing:-0.256px;">ProductService.aspx.designer.cs</div><svg style="left:1485.0px;top:639.5px;" width="6" height="6" viewBox="0 0 6 6"><path d="M6 0v6h-6z" fill="#e8e8e8"/></svg><svg style="left:1496.5px;top:637.5px;" width="6" height="9" viewBox="0 0 6 9"><path d="M1.500 4v-1.800a1.500 1.500 0 0 1 3 0v1.800" fill="none" stroke="#4aa3ff" stroke-width="1.100"/><rect x="0.550" y="4" width="4.900" height="4.400" fill="none" stroke="#4aa3ff" stroke-width="1.100"/></svg><svg style="left:1505.5px;top:634px;" width="16" height="16" viewBox="0 0 16 16"><path d="M1.500 2.500h13v11h-13z" fill="none" stroke="#d0d0d0" stroke-width="1.100"/><path d="M1.500 5.500h13M1.500 8.500h13" stroke="#d0d0d0" stroke-width="1"/><path d="M3 10.500h10" stroke="#d0d0d0" stroke-width="1" stroke-dasharray="1 1"/></svg><div class="t" style="left:1527px;top:635.14px;font-size:12px;line-height:16px;height:16px;color:#f0f0f0;letter-spacing:-0.249px;">Site.Master</div><svg style="left:1503px;top:656px;" width="6" height="10" viewBox="0 0 6 10"><path d="M0.500 0.500v9l4.500-4.500z" fill="none" stroke="#d0d0d0" stroke-width="1"/></svg><svg style="left:1514.5px;top:656.5px;" width="6" height="9" viewBox="0 0 6 9"><path d="M1.500 4v-1.800a1.500 1.500 0 0 1 3 0v1.800" fill="none" stroke="#4aa3ff" stroke-width="1.100"/><rect x="0.550" y="4" width="4.900" height="4.400" fill="none" stroke="#4aa3ff" stroke-width="1.100"/></svg><svg style="left:1524px;top:653px;" width="16" height="16" viewBox="0 0 16 16"><path d="M5.500 4.500h5l3 3v7h-8z" fill="none" stroke="#d0d0d0" stroke-width="1.100"/><path d="M0.500 2.500h5M3.500 0.500l2 2l-2 2" fill="none" stroke="#4aa3ff" stroke-width="1.200"/></svg><div class="t" style="left:1545.5px;top:654.14px;font-size:12px;line-height:16px;height:16px;color:#f0f0f0;letter-spacing:-0.312px;">Site.Master.cs</div><svg style="left:1503px;top:675px;" width="6" height="10" viewBox="0 0 6 10"><path d="M0.500 0.500v9l4.500-4.500z" fill="none" stroke="#d0d0d0" stroke-width="1"/></svg><svg style="left:1514.5px;top:675.5px;" width="6" height="9" viewBox="0 0 6 9"><path d="M1.500 4v-1.800a1.500 1.500 0 0 1 3 0v1.800" fill="none" stroke="#4aa3ff" stroke-width="1.100"/><rect x="0.550" y="4" width="4.900" height="4.400" fill="none" stroke="#4aa3ff" stroke-width="1.100"/></svg><svg style="left:1524px;top:672px;" width="16" height="16" viewBox="0 0 16 16"><path d="M5.500 4.500h5l3 3v7h-8z" fill="none" stroke="#d0d0d0" stroke-width="1.100"/><path d="M0.500 2.500h5M3.500 0.500l2 2l-2 2" fill="none" stroke="#4aa3ff" stroke-width="1.200"/></svg><div class="t" style="left:1545.5px;top:673.14px;font-size:12px;line-height:16px;height:16px;color:#f0f0f0;letter-spacing:-0.212px;">Site.Master.designer.cs</div><svg style="left:1485.0px;top:696.5px;" width="6" height="6" viewBox="0 0 6 6"><path d="M6 0v6h-6z" fill="#e8e8e8"/></svg><svg style="left:1496.5px;top:694.5px;" width="6" height="9" viewBox="0 0 6 9"><path d="M1.500 4v-1.800a1.500 1.500 0 0 1 3 0v1.800" fill="none" stroke="#4aa3ff" stroke-width="1.100"/><rect x="0.550" y="4" width="4.900" height="4.400" fill="none" stroke="#4aa3ff" stroke-width="1.100"/></svg><svg style="left:1505.5px;top:691px;" width="16" height="16" viewBox="0 0 16 16"><path d="M1.500 2.500h13v11h-13z" fill="none" stroke="#d0d0d0" stroke-width="1.100"/><path d="M1.500 5.500h13M1.500 8.500h13" stroke="#d0d0d0" stroke-width="1"/><path d="M3 10.500h10" stroke="#d0d0d0" stroke-width="1" stroke-dasharray="1 1"/></svg><div class="t" style="left:1527px;top:692.14px;font-size:12px;line-height:16px;height:16px;color:#f0f0f0;letter-spacing:-0.04px;">Site.Mobile.Master</div><svg style="left:1503px;top:713px;" width="6" height="10" viewBox="0 0 6 10"><path d="M0.500 0.500v9l4.500-4.500z" fill="none" stroke="#d0d0d0" stroke-width="1"/></svg><svg style="left:1514.5px;top:713.5px;" width="6" height="9" viewBox="0 0 6 9"><path d="M1.500 4v-1.800a1.500 1.500 0 0 1 3 0v1.800" fill="none" stroke="#4aa3ff" stroke-width="1.100"/><rect x="0.550" y="4" width="4.900" height="4.400" fill="none" stroke="#4aa3ff" stroke-width="1.100"/></svg><svg style="left:1524px;top:710px;" width="16" height="16" viewBox="0 0 16 16"><path d="M5.500 4.500h5l3 3v7h-8z" fill="none" stroke="#d0d0d0" stroke-width="1.100"/><path d="M0.500 2.500h5M3.500 0.500l2 2l-2 2" fill="none" stroke="#4aa3ff" stroke-width="1.200"/></svg><div class="t" style="left:1545.5px;top:711.14px;font-size:12px;line-height:16px;height:16px;color:#f0f0f0;letter-spacing:-0.132px;">Site.Mobile.Master.cs</div><svg style="left:1503px;top:732px;" width="6" height="10" viewBox="0 0 6 10"><path d="M0.500 0.500v9l4.500-4.500z" fill="none" stroke="#d0d0d0" stroke-width="1"/></svg><svg style="left:1514.5px;top:732.5px;" width="6" height="9" viewBox="0 0 6 9"><path d="M1.500 4v-1.800a1.500 1.500 0 0 1 3 0v1.800" fill="none" stroke="#4aa3ff" stroke-width="1.100"/><rect x="0.550" y="4" width="4.900" height="4.400" fill="none" stroke="#4aa3ff" stroke-width="1.100"/></svg><svg style="left:1524px;top:729px;" width="16" height="16" viewBox="0 0 16 16"><path d="M5.500 4.500h5l3 3v7h-8z" fill="none" stroke="#d0d0d0" stroke-width="1.100"/><path d="M0.500 2.500h5M3.500 0.500l2 2l-2 2" fill="none" stroke="#4aa3ff" stroke-width="1.200"/></svg><div class="t" style="left:1545.5px;top:730.14px;font-size:12px;line-height:16px;height:16px;color:#f0f0f0;letter-spacing:-0.119px;">Site.Mobile.Master.designer.cs</div><svg style="left:1485.0px;top:753.5px;" width="6" height="6" viewBox="0 0 6 6"><path d="M6 0v6h-6z" fill="#e8e8e8"/></svg><svg style="left:1496.5px;top:751.5px;" width="6" height="9" viewBox="0 0 6 9"><path d="M1.500 4v-1.800a1.500 1.500 0 0 1 3 0v1.800" fill="none" stroke="#4aa3ff" stroke-width="1.100"/><rect x="0.550" y="4" width="4.900" height="4.400" fill="none" stroke="#4aa3ff" stroke-width="1.100"/></svg><svg style="left:1505.5px;top:748px;" width="16" height="16" viewBox="0 0 16 16"><circle cx="10.500" cy="4" r="2.800" fill="none" stroke="#d0d0d0" stroke-width="1.200"/><path d="M10 8.500c3 0 5 1.500 5 5" fill="none" stroke="#d0d0d0" stroke-width="1.200"/><circle cx="5" cy="11" r="4" fill="#1f1f1f" stroke="#4aa3ff" stroke-width="1"/><path d="M1 11h8M5 7c-2.300 2.500-2.300 5.500 0 8M5 7c2.300 2.500 2.300 5.500 0 8" fill="none" stroke="#4aa3ff" stroke-width="0.900"/></svg><div class="t" style="left:1527px;top:749.14px;font-size:12px;line-height:16px;height:16px;color:#f0f0f0;letter-spacing:-0.222px;">ViewSwitcher.ascx</div><svg style="left:1503px;top:770px;" width="6" height="10" viewBox="0 0 6 10"><path d="M0.500 0.500v9l4.500-4.500z" fill="none" stroke="#d0d0d0" stroke-width="1"/></svg><svg style="left:1514.5px;top:770.5px;" width="6" height="9" viewBox="0 0 6 9"><path d="M1.500 4v-1.800a1.500 1.500 0 0 1 3 0v1.800" fill="none" stroke="#4aa3ff" stroke-width="1.100"/><rect x="0.550" y="4" width="4.900" height="4.400" fill="none" stroke="#4aa3ff" stroke-width="1.100"/></svg><svg style="left:1524px;top:767px;" width="16" height="16" viewBox="0 0 16 16"><path d="M5.500 4.500h5l3 3v7h-8z" fill="none" stroke="#d0d0d0" stroke-width="1.100"/><path d="M0.500 2.500h5M3.500 0.500l2 2l-2 2" fill="none" stroke="#4aa3ff" stroke-width="1.200"/></svg><div class="t" style="left:1545.5px;top:768.14px;font-size:12px;line-height:16px;height:16px;color:#f0f0f0;letter-spacing:-0.326px;">ViewSwitcher.ascx.cs</div><svg style="left:1503px;top:789px;" width="6" height="10" viewBox="0 0 6 10"><path d="M0.500 0.500v9l4.500-4.500z" fill="none" stroke="#d0d0d0" stroke-width="1"/></svg><svg style="left:1514.5px;top:789.5px;" width="6" height="9" viewBox="0 0 6 9"><path d="M1.500 4v-1.800a1.500 1.500 0 0 1 3 0v1.800" fill="none" stroke="#4aa3ff" stroke-width="1.100"/><rect x="0.550" y="4" width="4.900" height="4.400" fill="none" stroke="#4aa3ff" stroke-width="1.100"/></svg><svg style="left:1524px;top:786px;" width="16" height="16" viewBox="0 0 16 16"><path d="M5.500 4.500h5l3 3v7h-8z" fill="none" stroke="#d0d0d0" stroke-width="1.100"/><path d="M0.500 2.500h5M3.500 0.500l2 2l-2 2" fill="none" stroke="#4aa3ff" stroke-width="1.200"/></svg><div class="t" style="left:1545.5px;top:787.14px;font-size:12px;line-height:16px;height:16px;color:#f0f0f0;letter-spacing:-0.239px;">ViewSwitcher.ascx.designer.cs</div><svg style="left:1485.5px;top:808px;" width="6" height="10" viewBox="0 0 6 10"><path d="M0.500 0.500v9l4.500-4.500z" fill="none" stroke="#d0d0d0" stroke-width="1"/></svg><svg style="left:1496.5px;top:808.5px;" width="6" height="9" viewBox="0 0 6 9"><path d="M1.500 4v-1.800a1.500 1.500 0 0 1 3 0v1.800" fill="none" stroke="#4aa3ff" stroke-width="1.100"/><rect x="0.550" y="4" width="4.900" height="4.400" fill="none" stroke="#4aa3ff" stroke-width="1.100"/></svg><svg style="left:1505.5px;top:805px;" width="16" height="16" viewBox="0 0 16 16"><path d="M4.500 4.500v-3h6.500l3 3v9.500h-3.500" fill="none" stroke="#c4c4c4" stroke-width="1.100"/><path d="M4.200 9.200L8.700 14" stroke="#e8e8e8" stroke-width="2.300" stroke-linecap="round"/><path d="M4.800 5.300a3 3 0 1 0 1.800 4.500l-2.300-0.300l-1-1.700z" fill="#e8e8e8"/></svg><div class="t" style="left:1527px;top:806.14px;font-size:12px;line-height:16px;height:16px;color:#f0f0f0;letter-spacing:0.121px;">Web.config</div><svg style="left:1471.5px;top:826px;" width="14" height="12" viewBox="0 0 14 12"><path d="M0.500 11.500v-10.500h5l1.500 2h6.500v8.500z" fill="#6e5a36" stroke="#dcb67a" stroke-width="1"/><path d="M0.500 3.500h13" stroke="#dcb67a" stroke-width="1"/></svg><div class="t" style="left:1491.5px;top:825.14px;font-size:12px;line-height:16px;height:16px;color:#f0f0f0;letter-spacing:-0.402px;">Starter</div><svg style="left:1467px;top:846px;" width="6" height="10" viewBox="0 0 6 10"><path d="M0.500 0.500v9l4.500-4.500z" fill="none" stroke="#d0d0d0" stroke-width="1"/></svg><svg style="left:1478.8px;top:846.5px;" width="6" height="9" viewBox="0 0 6 9"><path d="M1.500 4v-1.800a1.500 1.500 0 0 1 3 0v1.800" fill="none" stroke="#4aa3ff" stroke-width="1.100"/><rect x="0.550" y="4" width="4.900" height="4.400" fill="none" stroke="#4aa3ff" stroke-width="1.100"/></svg><svg style="left:1489px;top:845px;" width="14" height="12" viewBox="0 0 14 12"><rect x="0.500" y="0.500" width="13" height="11" fill="none" stroke="#b4b4b4" stroke-width="1"/></svg><div class="t" style="left:1490.5px;top:846px;font-size:8.500px;line-height:10px;font-weight:bold;color:#5fcf7f;letter-spacing:-0.500px">C#</div><div class="t" style="left:1509.5px;top:844.14px;font-size:12px;line-height:16px;height:16px;color:#f0f0f0;letter-spacing:-0.097px;">ProductService.AppHost</div><svg style="left:1467px;top:865px;" width="6" height="10" viewBox="0 0 6 10"><path d="M0.500 0.500v9l4.500-4.500z" fill="none" stroke="#d0d0d0" stroke-width="1"/></svg><svg style="left:1478.8px;top:865.5px;" width="6" height="9" viewBox="0 0 6 9"><path d="M1.500 4v-1.800a1.500 1.500 0 0 1 3 0v1.800" fill="none" stroke="#4aa3ff" stroke-width="1.100"/><rect x="0.550" y="4" width="4.900" height="4.400" fill="none" stroke="#4aa3ff" stroke-width="1.100"/></svg><svg style="left:1489px;top:864px;" width="14" height="12" viewBox="0 0 14 12"><rect x="0.500" y="0.500" width="13" height="11" fill="none" stroke="#b4b4b4" stroke-width="1"/></svg><div class="t" style="left:1490.5px;top:865px;font-size:8.500px;line-height:10px;font-weight:bold;color:#5fcf7f;letter-spacing:-0.500px">C#</div><div class="t" style="left:1509.5px;top:863.14px;font-size:12px;line-height:16px;height:16px;color:#f0f0f0;letter-spacing:-0.168px;">StartApiAndBlazorHosts</div><svg style="left:1466.5px;top:886.5px;" width="6" height="6" viewBox="0 0 6 6"><path d="M6 0v6h-6z" fill="#e8e8e8"/></svg><svg style="left:1478.8px;top:886.5px;" width="6" height="6" viewBox="0 0 6 6"><path d="M3 0v6M0 3h6" stroke="#4fbf5f" stroke-width="1.100"/></svg><svg style="left:1489px;top:883px;" width="14" height="12" viewBox="0 0 14 12"><rect x="0.500" y="0.500" width="13" height="11" fill="none" stroke="#b4b4b4" stroke-width="1"/></svg><div class="t" style="left:1490.5px;top:884px;font-size:8.500px;line-height:10px;font-weight:bold;color:#5fcf7f;letter-spacing:-0.500px">C#</div><div class="t" style="left:1509.5px;top:882.14px;font-size:12px;line-height:16px;height:16px;color:#f0f0f0;letter-spacing:-0.181px;">StartApiAndClassicHosts</div><svg style="left:1485.5px;top:903px;" width="6" height="10" viewBox="0 0 6 10"><path d="M0.500 0.500v9l4.500-4.500z" fill="none" stroke="#d0d0d0" stroke-width="1"/></svg><svg style="left:1505.5px;top:900px;" width="16" height="16" viewBox="0 0 16 16"><path d="M8.500 2.500h6v5h-6zM1.500 7.500h4v3h-4zM8.500 10.500h4v3h-4z" fill="none" stroke="#d0d0d0" stroke-width="1.100"/><path d="M5.500 9h3M7 5v7h1.500" fill="none" stroke="#d0d0d0" stroke-width="1"/></svg><div class="t" style="left:1527px;top:901.14px;font-size:12px;line-height:16px;height:16px;color:#f0f0f0;letter-spacing:-0.275px;">Dependencies</div><svg style="left:1485.5px;top:922px;" width="6" height="10" viewBox="0 0 6 10"><path d="M0.500 0.500v9l4.500-4.500z" fill="none" stroke="#d0d0d0" stroke-width="1"/></svg><svg style="left:1496.5px;top:924.5px;" width="6" height="6" viewBox="0 0 6 6"><path d="M3 0v6M0 3h6" stroke="#4fbf5f" stroke-width="1.100"/></svg><div class="t" style="left:1505.5px;top:920.5px;font-size:11.500px;line-height:13px;font-weight:bold;color:#5fcf7f;letter-spacing:-0.300px">C#</div><div class="t" style="left:1527px;top:920.14px;font-size:12px;line-height:16px;height:16px;color:#f0f0f0;letter-spacing:-0.15px;">Program.cs</div></div></div><div class="a" style="left:1438px;top:927px;width:455px;height:1px;background:#3d3d3d;"></div><div class="t" style="left:1443px;top:929.34px;font-size:12px;line-height:16px;height:16px;color:#c0c0c0;letter-spacing:-0.336px;">Test Explorer</div><div class="t" style="left:1521.5px;top:929.34px;font-size:12px;line-height:16px;height:16px;color:#c0c0c0;letter-spacing:0.016px;">GitHub Copilot Chat</div><div class="t" style="left:1742px;top:929.34px;font-size:12px;line-height:16px;height:16px;color:#c0c0c0;letter-spacing:-0.37px;">Git Changes</div><div class="t" style="left:1818px;top:929.34px;font-size:12px;line-height:16px;height:16px;color:#c0c0c0;letter-spacing:-0.244px;">Properties</div><div class="a" style="left:1635px;top:927px;width:100.5px;height:20px;background:#1f1f1f;border:1px solid #3d3d3d;border-top:1px solid #1f1f1f;border-bottom:none"></div><div class="t" style="left:1641.5px;top:929.34px;font-size:12px;line-height:16px;height:16px;color:#ffffff;letter-spacing:-0.212px;">Solution Explorer</div><svg style="left:1900px;top:166px;" width="12" height="12" viewBox="0 0 12 12"><circle cx="6" cy="6" r="2.900" fill="none" stroke="#e6e6e6" stroke-width="2.200"/><circle cx="6" cy="6" r="4.700" fill="none" stroke="#e6e6e6" stroke-width="1.900" stroke-dasharray="1.850 1.840"/></svg><div class="a" style="left:1895px;top:182px;width:17.5px;height:2px;background:#7160e8;"></div><div class="a" style="left:1895px;top:184px;width:17.5px;height:21px;background:#2d2d2d;"></div><div class="a" style="left:1895px;top:205px;width:17.5px;height:582px;background:#3a3a3d;"></div><div class="a" style="left:1895px;top:222px;width:17.5px;height:288px;background:#000000;border:1px solid #4a4a4a;border-left:none;border-radius:0 3px 3px 0"></div><div class="a" style="left:1895px;top:395px;width:17.5px;height:1.5px;background:#f0f0f0;"></div><div class="a" style="left:1897px;top:224.5px;width:8px;height:1px;background:#8a8a8a;"></div><div class="a" style="left:1906px;top:224.5px;width:5px;height:1px;background:#5a9ac8;"></div><div class="a" style="left:1896px;top:238px;width:4px;height:1px;background:#777;"></div><div class="a" style="left:1895px;top:787px;width:18px;height:13px;background:#2b2b2b;"></div><div class="t" style="left:1896.5px;top:788.03px;font-size:10px;line-height:13px;height:13px;color:#f0f0f0;">F</div><div class="a" style="left:1895px;top:801px;width:18px;height:25px;background:#1f1f1f;border:1px solid #333"></div><div class="a" style="left:1895px;top:833px;width:18px;height:102px;background:#2b2b2b;"></div><div class="a" style="left:1895px;top:833px;width:18px;height:48px;background:#1f1f1f;border:1px solid #333"></div><svg style="left:1897px;top:839px;" width="9" height="9" viewBox="0 0 9 9"><path d="M0.500 0.500l8 8M8.500 0.500l-8 8" stroke="#e6e6e6" stroke-width="1.300" fill="none"/></svg><svg style="left:1898px;top:886px;" width="8" height="5" viewBox="0 0 8 5"><path d="M0 5h8l-4-5z" fill="#999"/></svg><div class="a" style="left:1895px;top:902.5px;width:18px;height:2px;background:#f0f0f0;"></div><svg style="left:1898px;top:910px;" width="8" height="5" viewBox="0 0 8 5"><path d="M0 0h8l-4 5z" fill="#999"/></svg><div class="a" style="left:43px;top:964px;width:1877px;height:24px;background:#861b2d;"></div><svg style="left:47.5px;top:968px;" width="17" height="17" viewBox="0 0 17 17"><path d="M1.500 1.500h14v10.500h-6l-3.500 3v-3h-4.500z" fill="none" stroke="#f4dfe3" stroke-width="1.200"/></svg><div class="t" style="left:71px;top:968.34px;font-size:12px;line-height:16px;height:16px;color:#ffffff;letter-spacing:-0.672px;">Ready</div><svg style="left:1528px;top:968px;" width="12" height="16" viewBox="0 0 12 16"><circle cx="6" cy="8" r="2.700" fill="none" stroke="#fff" stroke-width="1.100"/><path d="M6 1v4.300M6 10.700v4.300" stroke="#fff" stroke-width="1.100"/></svg><div class="t" style="left:1549px;top:968.34px;font-size:12px;line-height:16px;height:16px;color:#ffffff;letter-spacing:-1.348px;">35</div><svg style="left:1566px;top:973.5px;" width="8" height="4" viewBox="0 0 8 4"><path d="M0 4h8l-4-4z" fill="#fff"/></svg><svg style="left:1598px;top:969px;" width="14" height="14" viewBox="0 0 14 14"><path d="M1.500 12.500l1-3.500l8-8l2.500 2.500l-8 8z" fill="none" stroke="#fff" stroke-width="1.300"/></svg><div class="t" style="left:1620px;top:968.34px;font-size:12px;line-height:16px;height:16px;color:#ffffff;letter-spacing:-1.457px;">11</div><svg style="left:1654px;top:968px;" width="13" height="16" viewBox="0 0 13 16"><circle cx="3" cy="3" r="2" fill="none" stroke="#fff" stroke-width="1.200"/><circle cx="3" cy="13" r="2" fill="none" stroke="#fff" stroke-width="1.200"/><circle cx="10.500" cy="5" r="2" fill="none" stroke="#fff" stroke-width="1.200"/><path d="M3 5v6M10.500 7c0 3-7.500 1.500-7.500 4" fill="none" stroke="#fff" stroke-width="1.200"/></svg><div class="t" style="left:1675px;top:968.34px;font-size:12px;line-height:16px;height:16px;color:#ffffff;letter-spacing:-0.135px;">master</div><svg style="left:1717px;top:973.5px;" width="8" height="4" viewBox="0 0 8 4"><path d="M0 4h8l-4-4z" fill="#fff"/></svg><svg style="left:1754px;top:969px;" width="14" height="14" viewBox="0 0 14 14"><path d="M0.500 1.500h13v3h-13zM1.500 4.500v8.500h11v-8.500M4.500 7h5v6M4.500 7v6" fill="none" stroke="#fff" stroke-width="1.200"/></svg><div class="t" style="left:1775px;top:968.34px;font-size:12px;line-height:16px;height:16px;color:#ffffff;letter-spacing:-0.221px;">ProductService</div><svg style="left:1860px;top:973.5px;" width="8" height="4" viewBox="0 0 8 4"><path d="M0 4h8l-4-4z" fill="#fff"/></svg><svg style="left:1891px;top:968px;" width="14" height="16" viewBox="0 0 14 16"><path d="M2 12.500c1.500-1.500 1.500-3 1.500-5.500c0-2.500 1.500-4.500 3.500-4.500s3.500 2 3.500 4.500c0 2.500 0 4 1.500 5.500z" fill="none" stroke="#fff" stroke-width="1.200"/><path d="M5.500 14.500h3" stroke="#fff" stroke-width="1.200"/></svg><div class="a" style="left:513px;top:138px;width:956px;height:774px;border-radius:8px;overflow:hidden;box-shadow:0 0 0 1px rgba(110,110,110,0.450),0 1px 6px rgba(0,0,0,0.300)"><div class="a" style="left:0px;top:0px;width:956px;height:43px;background:#eaeaed;"></div><div class="a" style="left:82px;top:0px;width:1px;height:43px;background:#cfcfd8;"></div><svg style="left:52px;top:13px;" width="16" height="16" viewBox="0 0 16 16"><rect x="0.800" y="4.800" width="14.400" height="10.400" rx="2.200" fill="none" stroke="#5b5b66" stroke-width="1.300"/><path d="M3.500 1.500h9" stroke="#5b5b66" stroke-width="1.300" stroke-linecap="round"/><path d="M6 9h4" stroke="#5b5b66" stroke-width="1.300" stroke-linecap="round"/></svg><div class="a" style="left:87px;top:3px;width:221px;height:36px;background:#ffffff;border-radius:4px;box-shadow:0 0 3px rgba(0,0,0,0.250)"></div><svg style="left:95px;top:13px;" width="16" height="16" viewBox="0 0 16 16"><path d="M1 1.500h3v12h-3z" fill="#4a90d9"/><path d="M5 0.500h6l3 3v11h-9z" fill="#eef2f7" stroke="#c5cdd8" stroke-width="0.800"/><path d="M7 6h5M7 8.500h5M7 11h5" stroke="#b8c4d4" stroke-width="1"/></svg><div class="t" style="left:117px;top:14.34px;font-size:12px;line-height:16px;height:16px;color:#15141a;letter-spacing:0.045px;">- My ASP.NET Application</div><svg style="left:288px;top:17px;" width="8" height="8" viewBox="0 0 8 8"><path d="M0.500 0.500l7 7M7.500 0.500l-7 7" stroke="#15141a" stroke-width="1.300" fill="none"/></svg><svg style="left:323px;top:15px;" width="13" height="13" viewBox="0 0 13 13"><path d="M6.500 0.500v12M0.500 6.500h12" stroke="#3a3944" stroke-width="1.200" fill="none"/></svg><svg style="left:752px;top:17px;" width="12" height="7" viewBox="0 0 12 7"><path d="M0.500 0.500l5.500 5.500l5.500-5.500" stroke="#3a3944" stroke-width="1.200" fill="none"/></svg><div class="a" style="left:835.5px;top:20px;width:11px;height:1.2px;background:#222;"></div><svg style="left:882px;top:16px;" width="10" height="10" viewBox="0 0 10 10"><rect x="0.500" y="0.500" width="9" height="9" fill="none" stroke="#222" stroke-width="1"/></svg><svg style="left:927px;top:16px;" width="11" height="11" viewBox="0 0 11 11"><path d="M0.500 0.500l10 10M10.500 0.500l-10 10" stroke="#222" stroke-width="1" fill="none"/></svg><div class="a" style="left:0px;top:43px;width:956px;height:41px;background:#f9f9fb;"></div><svg style="left:17px;top:57px;" width="15" height="13" viewBox="0 0 15 13"><path d="M14.500 6.500h-13M7 1l-5.500 5.500l5.500 5.500" fill="none" stroke="#3a3944" stroke-width="1.400" stroke-linecap="round" stroke-linejoin="round"/></svg><svg style="left:52px;top:57px;" width="15" height="13" viewBox="0 0 15 13"><path d="M0.500 6.500h13M8 1l5.500 5.500l-5.500 5.500" fill="none" stroke="#b4b4bc" stroke-width="1.400" stroke-linecap="round" stroke-linejoin="round"/></svg><svg style="left:89px;top:56px;" width="15" height="15" viewBox="0 0 15 15"><path d="M13 7.500a5.700 5.700 0 1 1-1.700-4" fill="none" stroke="#3a3944" stroke-width="1.400" stroke-linecap="round"/><path d="M13.200 0.800v4h-4z" fill="#3a3944"/></svg><div class="a" style="left:172px;top:47px;width:613px;height:32px;background:#eeeef1;border-radius:4px"></div><svg style="left:181px;top:56px;" width="14" height="15" viewBox="0 0 14 15"><path d="M7 0.800c2 1 4 1.500 6 1.500c0 5-1 9.500-6 12c-5-2.500-6-7-6-12c2 0 4-0.500 6-1.500z" fill="none" stroke="#3a3944" stroke-width="1.300"/></svg><svg style="left:210px;top:55.5px;" width="12" height="15" viewBox="0 0 12 15"><rect x="0.800" y="6.500" width="10.400" height="7.800" rx="1.500" fill="none" stroke="#3a3944" stroke-width="1.300"/><path d="M3 6.500v-2.500a3 3 0 0 1 6 0v2.500" fill="none" stroke="#3a3944" stroke-width="1.300"/></svg><div class="t" style="left:234px;top:54.89px;font-size:13.3px;line-height:18px;height:18px;color:#15141a;letter-spacing:0.313px;">localhost</div><div class="t" style="left:289.5px;top:54.89px;font-size:13.3px;line-height:18px;height:18px;color:#6f6e78;letter-spacing:0.072px;">:44358/ProductService</div><div class="a" style="left:707.5px;top:52.5px;width:41px;height:23px;background:#ffffff;border-radius:3px"></div><div class="t" style="left:715px;top:56.52px;font-size:11.5px;line-height:15px;height:15px;color:#15141a;letter-spacing:-0.52px;">110%</div><svg style="left:760px;top:54px;" width="18" height="18" viewBox="0 0 18 18"><path d="M9 1.500l2.300 5l5.200 0.600l-3.900 3.600l1.100 5.300l-4.700-2.700l-4.700 2.700l1.100-5.300l-3.900-3.600l5.200-0.600z" fill="none" stroke="#3a3944" stroke-width="1.300" stroke-linejoin="round"/></svg><svg style="left:852px;top:55.5px;" width="16" height="16" viewBox="0 0 16 16"><circle cx="8" cy="8" r="7" fill="none" stroke="#3a3944" stroke-width="1.400"/><circle cx="8" cy="6.500" r="2.300" fill="#3a3944"/><path d="M3.500 12.500c1-2.500 8-2.500 9 0c-2 2.500-7 2.500-9 0z" fill="#3a3944"/></svg><svg style="left:888.5px;top:54px;" width="15" height="16" viewBox="0 0 15 16"><path d="M2 6.500h3v-2a2 2 0 0 1 4 0v2h3.500v3.500h1a2 2 0 0 1 0 4h-1v2.500h-10.500z" fill="none" stroke="#3a3944" stroke-width="1.400" stroke-linejoin="round"/></svg><svg style="left:925.5px;top:57.5px;" width="13" height="11" viewBox="0 0 13 11"><path d="M0.500 1h12M0.500 5.500h12M0.500 10h12" stroke="#45444f" stroke-width="1.150" fill="none"/></svg><div class="a" style="left:0px;top:84px;width:956px;height:690px;background:#ffffff;"></div><div class="a" style="left:0px;top:84px;width:956px;height:61px;background:#212529;"></div><div class="t" style="left:98px;top:100.88px;font-size:22px;line-height:29px;height:29px;color:#ffffff;letter-spacing:-0.118px;-webkit-text-stroke:0.300px #212529;">Application name</div><div class="t" style="left:293px;top:103.9px;font-size:17.6px;line-height:24px;height:24px;color:#9c9fa3;letter-spacing:-0.483px;">Home</div><div class="t" style="left:355.5px;top:103.9px;font-size:17.6px;line-height:24px;height:24px;color:#9c9fa3;letter-spacing:0.251px;">About</div><div class="t" style="left:420px;top:103.9px;font-size:17.6px;line-height:24px;height:24px;color:#9c9fa3;letter-spacing:-0.193px;">Contact</div><div class="t" style="left:497.5px;top:103.9px;font-size:17.6px;line-height:24px;height:24px;color:#c6c7c8;font-weight:bold;letter-spacing:-0.279px;">ProductService</div><div class="t" style="left:84.5px;top:158.95px;font-size:42px;line-height:56px;height:56px;color:#212529;letter-spacing:-2.252px;-webkit-text-stroke:0.700px #ffffff;">Product List</div><div class="a" style="left:85px;top:215.5px;width:645px;height:229px;background:transparent;border:1px solid #212529"></div><div class="t" style="left:85.5px;top:222.28px;font-size:16.5px;line-height:22px;height:22px;color:#212529;font-weight:bold;letter-spacing:-1.0px;">ID</div><div class="t" style="left:108.5px;top:222.28px;font-size:16.5px;line-height:22px;height:22px;color:#212529;font-weight:bold;letter-spacing:0.686px;">Name</div><div class="t" style="left:336.5px;top:222.28px;font-size:16.5px;line-height:22px;height:22px;color:#212529;font-weight:bold;letter-spacing:-0.216px;">Price</div><div class="t" style="left:87px;top:250.11px;font-size:17px;line-height:23px;height:23px;color:#212529;letter-spacing:0px;">1</div><div class="t" style="left:108px;top:250.11px;font-size:17px;line-height:23px;height:23px;color:#212529;letter-spacing:0.092px;">Laptop Pro</div><div class="t" style="left:336.5px;top:250.11px;font-size:17px;line-height:23px;height:23px;color:#212529;letter-spacing:-0.641px;">$1,299.98</div><div class="t" style="left:409px;top:250.11px;font-size:17px;line-height:23px;height:23px;color:#212529;letter-spacing:-0.347px;">16GB RAM, 1TB SSD, Intel i7 processor111</div><div class="t" style="left:87px;top:278.91px;font-size:17px;line-height:23px;height:23px;color:#212529;letter-spacing:0px;">2</div><div class="t" style="left:108px;top:278.91px;font-size:17px;line-height:23px;height:23px;color:#212529;letter-spacing:0.123px;">Updated Mouse</div><div class="t" style="left:336.5px;top:278.91px;font-size:17px;line-height:23px;height:23px;color:#212529;letter-spacing:-0.599px;">$25.99</div><div class="t" style="left:409px;top:278.91px;font-size:17px;line-height:23px;height:23px;color:#212529;letter-spacing:-0.039px;">Ergonomic design</div><div class="t" style="left:87px;top:306.91px;font-size:17px;line-height:23px;height:23px;color:#212529;letter-spacing:0px;">3</div><div class="t" style="left:108px;top:306.91px;font-size:17px;line-height:23px;height:23px;color:#212529;letter-spacing:-0.166px;">Mechanical Keyboard</div><div class="t" style="left:336.5px;top:306.91px;font-size:17px;line-height:23px;height:23px;color:#212529;letter-spacing:-0.599px;">$89.50</div><div class="t" style="left:409px;top:306.91px;font-size:17px;line-height:23px;height:23px;color:#212529;letter-spacing:-0.261px;">RGB backlit, Cherry MX switches</div><div class="t" style="left:87px;top:335.11px;font-size:17px;line-height:23px;height:23px;color:#212529;letter-spacing:0px;">4</div><div class="t" style="left:108px;top:335.11px;font-size:17px;line-height:23px;height:23px;color:#212529;letter-spacing:0.255px;">4K Monitor</div><div class="t" style="left:336.5px;top:335.11px;font-size:17px;line-height:23px;height:23px;color:#212529;letter-spacing:-0.575px;">$499.00</div><div class="t" style="left:409px;top:335.11px;font-size:17px;line-height:23px;height:23px;color:#212529;letter-spacing:-0.1px;">27-inch IPS panel, HDR support</div><div class="t" style="left:87px;top:363.91px;font-size:17px;line-height:23px;height:23px;color:#212529;letter-spacing:0px;">5</div><div class="t" style="left:108px;top:363.91px;font-size:17px;line-height:23px;height:23px;color:#212529;letter-spacing:-0.015px;">Noise-Canceling Headphones</div><div class="t" style="left:336.5px;top:363.91px;font-size:17px;line-height:23px;height:23px;color:#212529;letter-spacing:-0.575px;">$199.99</div><div class="t" style="left:409px;top:363.91px;font-size:17px;line-height:23px;height:23px;color:#212529;letter-spacing:0.14px;">Bluetooth 5.0, 30hr battery</div><div class="t" style="left:87px;top:391.91px;font-size:17px;line-height:23px;height:23px;color:#212529;letter-spacing:0px;">6</div><div class="t" style="left:108px;top:391.91px;font-size:17px;line-height:23px;height:23px;color:#212529;letter-spacing:0.068px;">New Product</div><div class="t" style="left:336.5px;top:391.91px;font-size:17px;line-height:23px;height:23px;color:#212529;letter-spacing:-0.599px;">$49.99</div><div class="t" style="left:409px;top:391.91px;font-size:17px;line-height:23px;height:23px;color:#212529;letter-spacing:-0.108px;">Test description</div><div class="t" style="left:87px;top:420.01px;font-size:17px;line-height:23px;height:23px;color:#212529;letter-spacing:0px;">8</div><div class="t" style="left:108px;top:420.01px;font-size:17px;line-height:23px;height:23px;color:#212529;letter-spacing:0.068px;">New Product</div><div class="t" style="left:336.5px;top:420.01px;font-size:17px;line-height:23px;height:23px;color:#212529;letter-spacing:-0.599px;">$49.99</div><div class="t" style="left:409px;top:420.01px;font-size:17px;line-height:23px;height:23px;color:#212529;letter-spacing:-0.108px;">Test description</div><div class="t" style="left:85px;top:448.61px;font-size:17px;line-height:23px;height:23px;color:#212529;letter-spacing:0.024px;">Total Products: 0</div><div class="a" style="left:85px;top:489px;width:785.5px;height:1px;background:#d3d4d5;"></div><div class="t" style="left:85px;top:510.61px;font-size:17px;line-height:23px;height:23px;color:#212529;letter-spacing:0.073px;">© 2025 - My ASP.NET Application</div></div><div class="a" style="left:43px;top:988px;width:1877px;height:48px;background:#eff0f2;background:linear-gradient(90deg,#beecee 0,#beecee 32.500%,#d6f0f1 36%,#ecf1f0 39.500%,#f3f1ee 43%,#f1f0ef 50%,#eff0f1 58%,#eff0f2 97.500%,#c4eef0 100%)"></div><div class="a" style="left:0px;top:1036px;width:1920px;height:5px;background:#f0f0f0;"></div><div class="a" style="left:43px;top:1036px;width:1877px;height:1px;background:#e2e6e8;"></div><div class="a" style="left:131.5px;top:1036.5px;width:50.5px;height:4.5px;background:#b9b9b9;"></div><div class="a" style="left:288px;top:1036.5px;width:50.5px;height:4.5px;background:#b9b9b9;"></div><div class="a" style="left:340.5px;top:1036.5px;width:50.0px;height:4.5px;background:#b9b9b9;"></div><div class="a" style="left:496px;top:1036.5px;width:50px;height:4.5px;background:#b9b9b9;"></div><div class="a" style="left:600px;top:1036.5px;width:50px;height:4.5px;background:#b9b9b9;"></div><div class="a" style="left:704px;top:1036.5px;width:50px;height:4.5px;background:#b9b9b9;"></div><div class="a" style="left:1068px;top:1036.5px;width:50px;height:4.5px;background:#b9b9b9;"></div><div class="a" style="left:45px;top:1038.5px;width:30px;height:2.5px;background:#1c5c86;"></div><div class="a" style="left:1276px;top:1036px;width:50px;height:4px;background:#4db2ec;"></div><div class="a" style="left:409px;top:993px;width:38px;height:38px;background:#e4f6f8;border-radius:4px;border:1px solid #d5eef1"></div><div class="a" style="left:420px;top:1028px;width:16px;height:3px;background:#2f7fe0;border-radius:1.500px"></div><svg style="left:63.0px;top:999.5px;" width="24" height="24" viewBox="0 0 24 24"><defs><linearGradient id="gw" x1="0" y1="0" x2="1" y2="1"><stop offset="0" stop-color="#4cc8ff"/><stop offset="1" stop-color="#0a6fd6"/></linearGradient><linearGradient id="gf" x1="0" y1="0" x2="0" y2="1"><stop offset="0" stop-color="#ffd43b"/><stop offset="0.500" stop-color="#ff7139"/><stop offset="1" stop-color="#e31587"/></linearGradient></defs><rect x="0.500" y="0.500" width="11" height="11" rx="1" fill="url(#gw)"/><rect x="12.500" y="0.500" width="11" height="11" rx="1" fill="url(#gw)"/><rect x="0.500" y="12.500" width="11" height="11" rx="1" fill="url(#gw)"/><rect x="12.500" y="12.500" width="11" height="11" rx="1" fill="url(#gw)"/></svg><svg style="left:107.0px;top:999.5px;" width="24" height="24" viewBox="0 0 24 24"><rect x="8" y="1" width="15" height="15" rx="1.500" fill="#f4f4f4" stroke="#d0d4d6" stroke-width="0.600"/><rect x="1" y="7" width="16" height="16" rx="1.500" fill="#1f1f1f"/><rect x="8" y="7" width="9" height="9" fill="#bdbdbd"/></svg><svg style="left:151.0px;top:999.5px;" width="24" height="24" viewBox="0 0 24 24"><rect x="0.500" y="3" width="23" height="18" rx="2.500" fill="#1a78d6"/><path d="M0.500 13l3.500-5l3.500 5l3-6l4 7l3.500-6l5 7v3.500a2.500 2.500 0 0 1-2.500 2.500h-18a2.500 2.500 0 0 1-2.500-2.500z" fill="#9fdcfa"/><path d="M0.500 13l3.500-5l3.500 5l3-6l4 7l3.500-6l5 7" fill="none" stroke="#e8f7ff" stroke-width="1.200"/></svg><svg style="left:195.5px;top:999.5px;" width="24" height="24" viewBox="0 0 24 24"><rect x="1" y="1" width="20" height="20" rx="1.500" fill="#1f8ae6"/><circle cx="11" cy="10.500" r="6" fill="#8fd6fa" stroke="#cdeeff" stroke-width="1.600"/><path d="M15.500 15.500l6.500 6.500" stroke="#1a6fd0" stroke-width="2.800" stroke-linecap="round"/></svg><svg style="left:239.5px;top:999.5px;" width="24" height="24" viewBox="0 0 24 24"><path d="M12 1c3 2 6.500 3 10 3c0 9-2.500 15.500-10 19z" fill="#0b5cb8"/><path d="M12 1c-3 2-6.500 3-10 3c0 9 2.500 15.500 10 19z" fill="#2a9bf0"/><path d="M2.300 11h19.400" stroke="#1479d4" stroke-width="0" /><path d="M12 11h9.500c-1 5.500-4 9.500-9.500 12z" fill="#0a4a9a"/><path d="M12 11h-9.500c-0.400-2.200-0.500-4.500-0.500-7c3.500 0 7-1 10-3z" fill="#4db8ff"/></svg><svg style="left:283.5px;top:999.5px;" width="24" height="24" viewBox="0 0 24 24"><circle cx="12" cy="12" r="9.500" fill="#b4000a"/><circle cx="12" cy="12" r="10.800" fill="none" stroke="#b4000a" stroke-width="2.600" stroke-dasharray="3.400 3.390"/><path d="M6 6.500h6.500M6 6.500v11M6 11.500h4.500" fill="none" stroke="#fff" stroke-width="2.200"/><path d="M12 9.500h6.500l-6.500 8h6.500" fill="none" stroke="#fff" stroke-width="2"/></svg><div class="a" style="left:292.5px;top:1028px;width:6px;height:3px;background:#75888c;border-radius:1.500px"></div><svg style="left:328.0px;top:999.5px;" width="24" height="24" viewBox="0 0 24 24"><rect x="0.500" y="3" width="23" height="18" rx="2" fill="#2d2d2d"/><rect x="0.500" y="3" width="23" height="4" rx="2" fill="#4a4a4a"/><path d="M4 10l4 3.500l-4 3.500" fill="none" stroke="#fff" stroke-width="1.800"/><path d="M10 17.500h7" stroke="#fff" stroke-width="1.800"/></svg><div class="a" style="left:337px;top:1028px;width:6px;height:3px;background:#75888c;border-radius:1.500px"></div><svg style="left:372.0px;top:999.5px;" width="24" height="24" viewBox="0 0 24 24"><path d="M0.500 3a1.500 1.500 0 0 1 1.500-1.500h6.500l2.500 2.500h11a1.500 1.500 0 0 1 1.500 1.500v3h-23z" fill="#e8a317"/><rect x="0.500" y="5" width="23" height="18" rx="1.500" fill="#ffd04d"/><path d="M4.500 23v-6a1.500 1.500 0 0 1 1.500-1.500h12a1.500 1.500 0 0 1 1.500 1.500v6z" fill="#1a7fe0"/><path d="M6 18.500h12v4.500h-12z" fill="#0f5fb8"/></svg><div class="a" style="left:381px;top:1028px;width:6px;height:3px;background:#75888c;border-radius:1.500px"></div><svg style="left:415.5px;top:999.5px;" width="24" height="24" viewBox="0 0 24 24"><defs><linearGradient id="gf2" x1="0.850" y1="0.100" x2="0.200" y2="0.950"><stop offset="0" stop-color="#fff36b"/><stop offset="0.300" stop-color="#ffa21f"/><stop offset="0.650" stop-color="#ff4f3a"/><stop offset="1" stop-color="#e3178c"/></linearGradient><linearGradient id="gf3" x1="0.800" y1="0" x2="0.300" y2="1"><stop offset="0" stop-color="#b07bff"/><stop offset="1" stop-color="#5a2fd0"/></linearGradient></defs><path d="M14.500 0.500c1.500 2 2 3.500 3.500 5c2.500 2 5 4.500 5 9c0 5.500-5 9-11 9s-11-4-11-10c0-2.500 0.800-4.500 2-6c0 1 0.300 1.800 0.800 2.500c0.400-2.500 1.500-4.500 3.500-6c0 1 0.200 1.800 0.700 2.500c1.500-1 4-2 6.500-6z" fill="url(#gf2)"/><circle cx="12.500" cy="12" r="5" fill="url(#gf3)"/><path d="M6 9c1.500-0.800 3-0.500 4 0.500c1.500-0.500 3 0 3.500 1c-1.500 0-2.500 0.800-2.500 2s1 2.500 3 2.500c2 0 3.500-1.500 3.800-3.500c1 3-0.800 7.500-5.800 7.500c-4.500 0-7.500-4-6-10z" fill="#ff7a1f"/><path d="M17 3.500c2 1.500 4.500 4 5 8c-1-2.500-2.500-3.500-4-4c0-1.500-0.300-2.800-1-4z" fill="#ffe14d"/></svg><svg style="left:459.5px;top:999.5px;" width="24" height="24" viewBox="0 0 24 24"><rect x="3.500" y="3" width="17" height="19.500" rx="1.500" fill="#3aa0e8"/><rect x="3.500" y="20" width="17" height="2.500" fill="#b25b1e"/><path d="M6.500 1v4M9.500 1v4M12.500 1v4M15.500 1v4M18 1v4" stroke="#1a4f86" stroke-width="1.300"/><path d="M6.500 8.500h11M6.500 11.500h11M6.500 14.500h11M6.500 17.500h11" stroke="#0f4f8e" stroke-width="1.400"/></svg><svg style="left:504.0px;top:999.5px;" width="24" height="24" viewBox="0 0 24 24"><rect x="2.500" y="2" width="17" height="21" rx="1" fill="#f3f3ea" stroke="#9aa08c" stroke-width="0.800"/><rect x="4" y="11" width="14" height="11" fill="#5fb833"/><path d="M5 7h4M11 7h5M7 5v4" stroke="#555" stroke-width="1"/><path d="M21.500 1l2 2l-9.500 13l-3 1.500l0.500-3.500z" fill="#e8932a" stroke="#8a4b12" stroke-width="0.600"/><path d="M2.500 4.500h17" stroke="#c0c4b4" stroke-width="1"/></svg><div class="a" style="left:513px;top:1028px;width:6px;height:3px;background:#75888c;border-radius:1.500px"></div><svg style="left:548.0px;top:999.5px;" width="24" height="24" viewBox="0 0 24 24"><ellipse cx="12" cy="14.500" rx="9.500" ry="6" fill="#f5a21d" stroke="#b36a00" stroke-width="1"/><circle cx="12" cy="14.500" r="4" fill="#fff" stroke="#b33a1a" stroke-width="1.200"/><circle cx="12" cy="14.500" r="1.800" fill="#c22a1a"/><circle cx="6" cy="6" r="2.300" fill="#f5a21d" stroke="#b36a00" stroke-width="0.800"/><circle cx="12" cy="4.500" r="2.300" fill="#f5a21d" stroke="#b36a00" stroke-width="0.800"/><circle cx="18" cy="6" r="2.300" fill="#f5a21d" stroke="#b36a00" stroke-width="0.800"/><path d="M2 10l-1.500-2M22 10l1.500-2" stroke="#b36a00" stroke-width="1"/></svg><svg style="left:591.5px;top:999.5px;" width="24" height="24" viewBox="0 0 24 24"><path d="M2 11c0-3 3-4.500 6-3.500c2-2 6-2 8 0c2.500-2.500 6-4.500 7-4c0.500 3-1 7.500-3.500 10.500c-2 3-6 5-10 4.500c-5 0-7.500-3.500-7.500-7.500z" fill="#8a8478"/><circle cx="7.500" cy="10" r="2.600" fill="#fff"/><circle cx="13" cy="10" r="2.600" fill="#fff"/><circle cx="7.800" cy="10.300" r="1.200" fill="#111"/><circle cx="13.300" cy="10.300" r="1.200" fill="#111"/><ellipse cx="3.500" cy="13.500" rx="2.300" ry="1.600" fill="#222"/><path d="M14 17l8 5.500" stroke="#c9a24a" stroke-width="1.800"/><path d="M21 21.500l2.500 1.800" stroke="#333" stroke-width="2"/></svg><svg style="left:636.0px;top:999.5px;" width="24" height="24" viewBox="0 0 24 24"><path d="M3 1.500h12l6.500 6.500v14.500h-18.500z" fill="#f2f2f2" stroke="#6e6e6e" stroke-width="1.600" stroke-linejoin="round"/><path d="M15 1.500l6.500 6.500h-6.500z" fill="#8a8a8a"/></svg><svg style="left:680.0px;top:999.5px;" width="24" height="24" viewBox="0 0 24 24"><path d="M17.500 1l5.500 2.500v17l-5.500 2.500l-10-9.500l-4.500 3.500l-2-1v-8l2-1l4.500 3.500zM17.500 7.500l-5.500 4.500l5.500 4.500zM3 9.500v5l2.500-2.500z" fill="#8c52d8" fill-rule="evenodd"/><path d="M17.500 1l5.500 2.500v17l-5.500 2.500z" fill="#b47cf0"/></svg><div class="a" style="left:689px;top:1028px;width:6px;height:3px;background:#75888c;border-radius:1.500px"></div><svg style="left:724.0px;top:999.5px;" width="24" height="24" viewBox="0 0 24 24"><path d="M17.500 1l5.500 2.700v16.600l-5.500 2.700l-10-9.200l-4.500 3.500l-2-1v-8.600l2-1l4.500 3.500zM17.500 7.300l-5.800 4.700l5.800 4.700z" fill="#1f8ad6" fill-rule="evenodd"/><path d="M17.500 1l5.500 2.700v16.600l-5.500 2.700z" fill="#2aa6f2"/></svg><svg style="left:768.0px;top:999.5px;" width="24" height="24" viewBox="0 0 24 24"><path d="M12 0.500l5 5l-5 5l-5-5z" fill="#f0645a"/><path d="M5.500 7l5 5l-5 5l-5-5z" fill="#7aa8f0"/><path d="M18.500 7l5 5l-5 5l-5-5z" fill="#7ccf6a"/><path d="M12 13.500l5 5l-5 5l-5-5z" fill="#f5d76a"/><path d="M9 3.500l6 17M15 3.500l-2 6" stroke="#fff" stroke-width="1" opacity="0.700"/></svg><svg style="left:811.5px;top:999.5px;" width="24" height="24" viewBox="0 0 24 24"><circle cx="12" cy="12" r="11" fill="#db4437"/><path d="M12 12L2.500 6.500a11 11 0 0 0 8.500 16.400z" fill="#0f9d58"/><path d="M12 12l-1 10.900a11 11 0 0 0 10.600-16.400h-10.600z" fill="#ffcd40"/><path d="M2.500 6.500a11 11 0 0 1 19.100 0h-9.600z" fill="#db4437"/><circle cx="12" cy="12" r="5" fill="#fff"/><circle cx="12" cy="12" r="4" fill="#4285f4"/></svg><svg style="left:855.5px;top:999.5px;" width="24" height="24" viewBox="0 0 24 24"><path d="M1 1l8 1l-2.300 2.300l4 4l-2.400 2.400l-4-4l-2.300 2.300z" fill="#2a9be8" stroke="#1668a8" stroke-width="0.600"/><path d="M23 23l-8-1l2.300-2.300l-4-4l2.400-2.400l4 4l2.300-2.300z" fill="#4cc23a" stroke="#2a7a1a" stroke-width="0.600"/><rect x="7" y="10" width="11" height="9" rx="1" fill="#c9ced2" stroke="#5a6066" stroke-width="0.800"/><path d="M9.500 10v-2.500a3 3 0 0 1 6 0v2.500" fill="none" stroke="#7a8088" stroke-width="1.800"/></svg><svg style="left:899.0px;top:999.5px;" width="24" height="24" viewBox="0 0 24 24"><g transform="translate(24,0) scale(-1,1)"><ellipse cx="12" cy="17" rx="9.500" ry="6" fill="#f5b81a"/><circle cx="11" cy="7.500" r="5.500" fill="#fbd02a"/><path d="M4 9.500l3.500-1.500l0.500 2.500z" fill="#f07a1a"/><circle cx="9.500" cy="6.500" r="1" fill="#222"/><path d="M12 1.500c1-1 2-1 2.500 0" stroke="#d94a1a" stroke-width="1.400" fill="none"/><path d="M10 16c3 2 7 2 9-1" stroke="#d99a0a" stroke-width="1.200" fill="none"/></g></svg><svg style="left:943.0px;top:999.5px;" width="24" height="24" viewBox="0 0 24 24"><circle cx="9" cy="9" r="8" fill="#2a7fd6"/><path d="M3 6c2 0 3 2 5 1s2-4 4-4M5 14c2-1 4 0 5 2M13 4c1 2 3 3 3 5" stroke="#5fcf4a" stroke-width="2.200" fill="none"/><path d="M2 4l3-2l2 2" fill="#f5c21a"/><rect x="13" y="8" width="9" height="15" rx="1" fill="#b8bec4" stroke="#5a6068" stroke-width="0.800"/><path d="M15 11h5M15 14h5" stroke="#5a6068" stroke-width="1.200"/><circle cx="17.500" cy="19.500" r="1.200" fill="#4cc23a"/></svg><svg style="left:987.0px;top:999.5px;" width="24" height="24" viewBox="0 0 24 24"><path d="M3 9c0-5 3.500-7.500 8-7.500c3 0 5 1 6 2.500c3-1 5.500 1 5.500 5c0 3-1.500 6-3 7c-1 0.500-2 0-2.500-1l-0.500 5c-0.500 3-5 3-5.500 0l-0.500-6c-1.500 1-4 0.500-5.500-1c-1.300-1.200-2-2.500-2-4z" fill="#336791"/><path d="M11 4c2 0 3 1.500 3 4s-1 5-1 7" stroke="#fff" stroke-width="0.900" fill="none"/><circle cx="8.500" cy="8" r="0.900" fill="#fff"/><circle cx="16.500" cy="8" r="0.900" fill="#fff"/></svg><svg style="left:1031.0px;top:999.5px;" width="24" height="24" viewBox="0 0 24 24"><rect x="0.500" y="0.500" width="23" height="23" rx="2.500" fill="#1f4e79"/><path d="M4 5c3 0 6 2 8 6s4 7 8 9M9 8c2-1 5 0 7 2M6 7c0 3 1 6 3 9" stroke="#e8f0f8" stroke-width="1.200" fill="none"/><path d="M17 3l2 3l-3 1" stroke="#e8f0f8" stroke-width="1" fill="none"/></svg><svg style="left:1741px;top:1008px;" width="12" height="8" viewBox="0 0 12 8"><path d="M1 7l5-5.500l5 5.500" fill="none" stroke="#1a1a1a" stroke-width="1.500"/></svg><svg style="left:1771px;top:1004px;" width="16" height="14" viewBox="0 0 16 14"><path d="M1 5.500a10 10 0 0 1 14 0M3.200 8a7 7 0 0 1 9.600 0M5.400 10.300a3.800 3.800 0 0 1 5.200 0" fill="none" stroke="#1a1a1a" stroke-width="1.200"/><circle cx="8" cy="12.500" r="1.100" fill="#1a1a1a"/></svg><svg style="left:1796px;top:1005px;" width="16" height="15" viewBox="0 0 16 15"><path d="M1 5.500h2.500l3.500-3.500v10l-3.500-3.500h-2.500z" fill="none" stroke="#1a1a1a" stroke-width="1.100"/><circle cx="10.500" cy="10" r="4" fill="#1a1a1a"/><path d="M8.800 8.300l3.400 3.400M12.200 8.300l-3.400 3.400" stroke="#fff" stroke-width="1"/></svg><svg style="left:1818px;top:1004px;" width="18" height="14" viewBox="0 0 18 14"><rect x="2.500" y="4" width="12.500" height="8" rx="1.500" fill="#1a1a1a"/><path d="M16 6.500v3" stroke="#1a1a1a" stroke-width="1.500"/><path d="M4 1l-3 5h2.500l-1 4" fill="none" stroke="#1a1a1a" stroke-width="1.100"/></svg><div class="t" style="left:1800px;top:998px;font-size:12px;line-height:14px;height:14px;color:#1a1a1a;width:99.500px;text-align:right;letter-spacing:-0.100px">9:11 PM</div><div class="t" style="left:1800px;top:1014px;font-size:12px;line-height:14px;height:14px;color:#1a1a1a;width:99.500px;text-align:right;letter-spacing:-0.100px">8/2/2025</div></body></html>
